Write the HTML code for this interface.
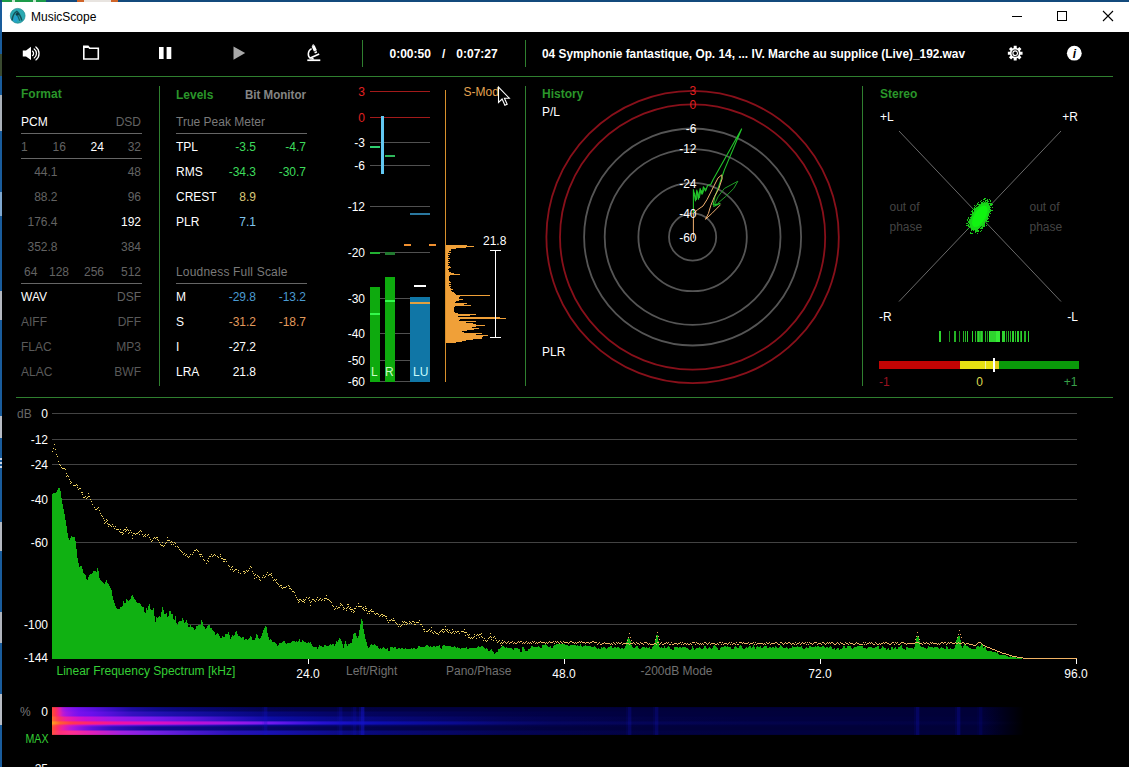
<!DOCTYPE html>
<html><head><meta charset="utf-8"><title>MusicScope</title>
<style>html,body{margin:0;padding:0;background:#000;overflow:hidden}svg{display:block}text{font-family:"Liberation Sans",sans-serif;font-size:12px}</style>
</head><body>
<svg width="1129" height="767" viewBox="0 0 1129 767">
<rect x="0" y="0" width="1129" height="767" fill="#000"/>
<rect x="0" y="0" width="2" height="767" fill="#195c9c"/>
<rect x="0" y="54" width="2" height="22" fill="#3a4a30"/>
<rect x="0" y="95" width="2" height="36" fill="#aab0b8"/>
<rect x="0" y="192" width="2" height="24" fill="#7fa8d0"/>
<rect x="0" y="291" width="2" height="29" fill="#b4b8c0"/>
<rect x="0" y="416" width="2" height="22" fill="#b8bcc4"/>
<rect x="0" y="522" width="2" height="29" fill="#b4b8c0"/>
<rect x="0" y="612" width="2" height="31" fill="#b0b4bc"/>
<rect x="0" y="694" width="2" height="31" fill="#b8bcc4"/>
<rect x="0" y="458" width="2" height="2" fill="#c8d4e8"/>
<rect x="0" y="462" width="2" height="2" fill="#c8d4e8"/>
<rect x="0" y="466" width="2" height="2" fill="#c8d4e8"/>
<rect x="0" y="0" width="1129" height="2" fill="#134a7c"/>
<rect x="2" y="0" width="44" height="2" fill="#1c9a48"/>
<rect x="12" y="0" width="3" height="2" fill="#c8e8d0"/>
<rect x="33" y="0" width="3" height="2" fill="#c8e8d0"/>
<rect x="77" y="0" width="7" height="2" fill="#d06428"/>
<rect x="84" y="0" width="27" height="2" fill="#e8e4e0"/>
<rect x="111" y="0" width="7" height="2" fill="#d06428"/>
<rect x="2" y="2" width="1127" height="30" fill="#fff"/>
<circle cx="17.7" cy="15.8" r="7.4" fill="#2aa9b2" stroke="#1f8890" stroke-width="0.7"/>
<path d="M13.3 20.8 C13.6 17.6 14.8 15.6 16.6 14.6 L18.2 18.6 L16.2 22.6 Z" fill="#22a0cc"/>
<path d="M12 20.4 C12.6 15.6 14.4 12.6 16.8 11.4 C18.8 12.8 20.6 16.2 21.8 20.4" fill="none" stroke="#14505a" stroke-width="1.5"/>
<circle cx="17.3" cy="14.3" r="1.5" fill="#0e3c44"/>
<path d="M17.6 15.5 L19.8 20.8" stroke="#15606c" stroke-width="1.2"/>
<text x="31" y="20.5" fill="#000">MusicScope</text>
<g stroke="#000" stroke-width="1" fill="none" shape-rendering="crispEdges">
<line x1="1012" y1="16.5" x2="1022" y2="16.5"/>
<rect x="1057.5" y="11.5" width="9" height="9"/>
</g>
<path d="M1103 11 L1113 21 M1113 11 L1103 21" stroke="#000" stroke-width="1.1" fill="none"/>
<g shape-rendering="crispEdges">
<rect x="16" y="76" width="1097" height="1" fill="#2f7f2f"/>
<rect x="16" y="397" width="1097" height="1" fill="#2f7f2f"/>
<rect x="362" y="40" width="1" height="27" fill="#2f7f2f"/>
<rect x="525" y="40" width="1" height="27" fill="#2f7f2f"/>
<rect x="159" y="86" width="1" height="300" fill="#2f7f2f"/>
<rect x="525" y="86" width="1" height="300" fill="#2f7f2f"/>
<rect x="862" y="86" width="1" height="300" fill="#2f7f2f"/>
</g>
<path d="M22.8 50.6 H26 L31 46.8 V60 L26 56.4 H22.8 Z" fill="#fff"/>
<g fill="none" stroke="#fff" stroke-width="1.3" stroke-linecap="round">
<path d="M32.6 51.2 A3 3 0 0 1 32.6 55.6"/>
<path d="M34.2 48.9 A5.6 5.6 0 0 1 34.2 57.9"/>
<path d="M35.9 46.9 A8.3 8.3 0 0 1 35.9 59.9"/>
</g>
<path d="M83.8 59 V46.3 H88 L89.6 48.3 H98.3 V59 Z" fill="none" stroke="#fff" stroke-width="1.6" stroke-linejoin="miter"/>
<rect x="83.8" y="46" width="4.6" height="2" fill="#fff"/>
<rect x="159" y="47" width="4.6" height="12" fill="#fff"/>
<rect x="166.6" y="47" width="4.7" height="12" fill="#fff"/>
<path d="M233.5 46.5 L245.2 53.1 L233.5 59.7 Z" fill="#a8a8a8"/>
<g fill="#fff" stroke="none">
<rect x="307.3" y="59.4" width="13" height="1.7"/>
<path d="M311.6 46.4 L314.6 45.2 L316.9 50.2 L313.9 51.4 Z"/>
<path d="M312.0 45.0 L313.8 44.3 L314.3 45.4 L312.5 46.1 Z"/>
<path d="M314.3 51.9 L316.6 51.0 L317.2 52.5 L314.9 53.4 Z"/>
</g>
<path d="M311.6 48.6 C307.6 50.8 307.2 56.2 310.6 58.6" fill="none" stroke="#fff" stroke-width="1.5"/>
<path d="M310.2 58.0 L319.2 53.9" fill="none" stroke="#fff" stroke-width="1.6"/>
<path d="M310.5 59.5 C311 57.6 313.5 57.4 314.2 59.5" fill="#fff"/>
<text x="389.5" y="58" fill="#fff" font-weight="bold">0:00:50</text>
<text x="442" y="58" fill="#fff" font-weight="bold">/</text>
<text x="456.3" y="58" fill="#fff" font-weight="bold">0:07:27</text>
<text x="542" y="58" fill="#fff" font-weight="bold" textLength="423" lengthAdjust="spacingAndGlyphs">04 Symphonie fantastique, Op. 14, ... IV. Marche au supplice (Live)_192.wav</text>
<path d="M1013.71 45.85 L1016.69 45.85 L1016.74 48.03 L1017.77 48.45 L1019.34 46.95 L1021.45 49.06 L1019.95 50.63 L1020.37 51.65 L1022.55 51.71 L1022.55 54.69 L1020.37 54.74 L1019.95 55.77 L1021.45 57.34 L1019.34 59.45 L1017.77 57.95 L1016.75 58.37 L1016.69 60.55 L1013.71 60.55 L1013.66 58.37 L1012.63 57.95 L1011.06 59.45 L1008.95 57.34 L1010.45 55.77 L1010.03 54.75 L1007.85 54.69 L1007.85 51.71 L1010.03 51.66 L1010.45 50.63 L1008.95 49.06 L1011.06 46.95 L1012.63 48.45 L1013.65 48.03 Z" fill="#fff"/>
<circle cx="1015.2" cy="53.2" r="3.6" fill="#000"/>
<circle cx="1015.2" cy="53.2" r="2.3" fill="none" stroke="#fff" stroke-width="1.1"/>
<circle cx="1074.3" cy="53.2" r="7.4" fill="#fff"/>
<text x="1074.3" y="58" fill="#000" text-anchor="middle" font-family="'Liberation Serif',serif" font-style="italic" font-weight="bold" font-size="13">i</text>
<text x="21" y="98" fill="#2a962a" font-weight="bold">Format</text>
<text x="21" y="126" fill="#fff">PCM</text>
<text x="141" y="126" fill="#636363" text-anchor="end">DSD</text>
<g shape-rendering="crispEdges">
<rect x="21" y="133" width="121" height="1" fill="#666"/>
<rect x="21" y="158" width="121" height="1" fill="#666"/>
<rect x="21" y="283" width="121" height="1" fill="#666"/>
</g>
<text x="21" y="151" fill="#636363">1</text>
<text x="52.5" y="151" fill="#636363">16</text>
<text x="90.5" y="151" fill="#fff">24</text>
<text x="141" y="151" fill="#636363" text-anchor="end">32</text>
<text x="57.5" y="176" fill="#636363" text-anchor="end">44.1</text>
<text x="141" y="176" fill="#636363" text-anchor="end">48</text>
<text x="57.5" y="201" fill="#636363" text-anchor="end">88.2</text>
<text x="141" y="201" fill="#636363" text-anchor="end">96</text>
<text x="57.5" y="226" fill="#636363" text-anchor="end">176.4</text>
<text x="141" y="226" fill="#fff" text-anchor="end">192</text>
<text x="57.5" y="251" fill="#636363" text-anchor="end">352.8</text>
<text x="141" y="251" fill="#636363" text-anchor="end">384</text>
<text x="24" y="276" fill="#636363">64</text>
<text x="49" y="276" fill="#636363">128</text>
<text x="84" y="276" fill="#636363">256</text>
<text x="141" y="276" fill="#636363" text-anchor="end">512</text>
<text x="21" y="301" fill="#fff">WAV</text>
<text x="141" y="301" fill="#636363" text-anchor="end">DSF</text>
<text x="21" y="326" fill="#5a5a5a">AIFF</text>
<text x="141" y="326" fill="#5a5a5a" text-anchor="end">DFF</text>
<text x="21" y="351" fill="#5a5a5a">FLAC</text>
<text x="141" y="351" fill="#5a5a5a" text-anchor="end">MP3</text>
<text x="21" y="376" fill="#5a5a5a">ALAC</text>
<text x="141" y="376" fill="#5a5a5a" text-anchor="end">BWF</text>
<text x="176" y="99" fill="#2a962a" font-weight="bold">Levels</text>
<text x="245" y="99" fill="#858585" font-weight="bold" textLength="61" lengthAdjust="spacingAndGlyphs">Bit Monitor</text>
<text x="176" y="126" fill="#7a7a7a">True Peak Meter</text>
<g shape-rendering="crispEdges">
<rect x="176" y="133" width="131" height="1" fill="#666"/>
<rect x="176" y="283" width="131" height="1" fill="#666"/>
</g>
<text x="176" y="151" fill="#fff">TPL</text>
<text x="256" y="151" fill="#3ddc5c" text-anchor="end">-3.5</text>
<text x="306" y="151" fill="#3ddc5c" text-anchor="end">-4.7</text>
<text x="176" y="176" fill="#fff">RMS</text>
<text x="256" y="176" fill="#3ddc5c" text-anchor="end">-34.3</text>
<text x="306" y="176" fill="#3ddc5c" text-anchor="end">-30.7</text>
<text x="176" y="201" fill="#fff">CREST</text>
<text x="256" y="201" fill="#d9c878" text-anchor="end">8.9</text>
<text x="176" y="226" fill="#fff">PLR</text>
<text x="256" y="226" fill="#7fc4ee" text-anchor="end">7.1</text>
<text x="176" y="276" fill="#7a7a7a" textLength="111.5" lengthAdjust="spacing">Loudness Full Scale</text>
<text x="176" y="301" fill="#fff">M</text>
<text x="256" y="301" fill="#4a9bd2" text-anchor="end">-29.8</text>
<text x="306" y="301" fill="#4a9bd2" text-anchor="end">-13.2</text>
<text x="176" y="326" fill="#fff">S</text>
<text x="256" y="326" fill="#e29a5c" text-anchor="end">-31.2</text>
<text x="306" y="326" fill="#e29a5c" text-anchor="end">-18.7</text>
<text x="176" y="351" fill="#fff">I</text>
<text x="256" y="351" fill="#fff" text-anchor="end">-27.2</text>
<text x="176" y="376" fill="#fff">LRA</text>
<text x="256" y="376" fill="#fff" text-anchor="end">21.8</text>
<g shape-rendering="crispEdges">
<rect x="370" y="91" width="60" height="1" fill="#a31a1a"/>
<rect x="370" y="117" width="60" height="1" fill="#a31a1a"/>
<rect x="370" y="142" width="60" height="1" fill="#505050"/>
<rect x="370" y="165" width="60" height="1" fill="#505050"/>
<rect x="370" y="206" width="60" height="1" fill="#505050"/>
<rect x="370" y="252" width="60" height="1" fill="#505050"/>
<rect x="370" y="298" width="60" height="1" fill="#505050"/>
<rect x="370" y="333" width="60" height="1" fill="#505050"/>
<rect x="370" y="360" width="60" height="1" fill="#505050"/>
<rect x="370" y="381" width="60" height="1" fill="#505050"/>
</g>
<text x="365" y="96" fill="#e02020" text-anchor="end">3</text>
<text x="365" y="122" fill="#e02020" text-anchor="end">0</text>
<text x="365" y="147" fill="#fff" text-anchor="end">-3</text>
<text x="365" y="170" fill="#fff" text-anchor="end">-6</text>
<text x="365" y="211" fill="#fff" text-anchor="end">-12</text>
<text x="365" y="257" fill="#fff" text-anchor="end">-20</text>
<text x="365" y="303" fill="#fff" text-anchor="end">-30</text>
<text x="365" y="338" fill="#fff" text-anchor="end">-40</text>
<text x="365" y="365" fill="#fff" text-anchor="end">-50</text>
<text x="365" y="386" fill="#fff" text-anchor="end">-60</text>
<g shape-rendering="crispEdges">
<rect x="381" y="116" width="3" height="58" fill="#62c8f2"/>
<rect x="370" y="146" width="10" height="2" fill="#2fd070"/>
<rect x="385" y="155" width="10" height="2" fill="#2fb85c"/>
<rect x="410" y="213" width="20" height="2" fill="#2a78a0"/>
<rect x="370" y="252" width="10" height="2" fill="#22b032"/>
<rect x="385" y="252" width="10" height="3" fill="#227a30"/>
<rect x="404" y="244" width="7" height="2" fill="#f09030"/>
<rect x="429" y="244" width="7" height="2" fill="#f09030"/>
<rect x="370" y="287" width="10" height="95" fill="#0eaa0e"/>
<rect x="385" y="277" width="10" height="105" fill="#0eaa0e"/>
<rect x="370" y="313" width="10" height="2" fill="#34f84c"/>
<rect x="385" y="300" width="10" height="2" fill="#34f84c"/>
<rect x="410" y="297" width="20" height="85" fill="#1076a6"/>
<rect x="410" y="302" width="20" height="2" fill="#e0a040"/>
<rect x="414" y="285" width="12" height="2" fill="#fff"/>
</g>
<text x="371" y="376" fill="#c8fcc8">L</text>
<text x="385" y="376" fill="#c8fcc8">R</text>
<text x="413" y="376" fill="#c8fcfc">LU</text>
<g shape-rendering="crispEdges">
<rect x="445" y="90" width="1" height="292" fill="#d8902c"/>
</g>
<text x="463.5" y="96" fill="#e4a352">S-Mod</text>
<g shape-rendering="crispEdges" fill="#f0a038">
<rect x="446" y="245" width="21" height="1"/>
<rect x="446" y="246" width="28" height="1"/>
<rect x="446" y="247" width="20" height="1"/>
<rect x="446" y="248" width="10" height="1"/>
<rect x="446" y="249" width="5" height="1"/>
<rect x="446" y="250" width="5" height="1"/>
<rect x="446" y="251" width="3" height="1"/>
<rect x="446" y="252" width="5" height="1"/>
<rect x="446" y="253" width="2" height="1"/>
<rect x="446" y="254" width="4" height="1"/>
<rect x="446" y="255" width="2" height="1"/>
<rect x="446" y="256" width="3" height="1"/>
<rect x="446" y="257" width="2" height="1"/>
<rect x="446" y="258" width="4" height="1"/>
<rect x="446" y="259" width="2" height="1"/>
<rect x="446" y="260" width="3" height="1"/>
<rect x="446" y="261" width="2" height="1"/>
<rect x="446" y="262" width="4" height="1"/>
<rect x="446" y="263" width="2" height="1"/>
<rect x="446" y="264" width="3" height="1"/>
<rect x="446" y="265" width="2" height="1"/>
<rect x="446" y="266" width="4" height="1"/>
<rect x="446" y="267" width="5" height="1"/>
<rect x="446" y="268" width="3" height="1"/>
<rect x="446" y="269" width="2" height="1"/>
<rect x="446" y="270" width="3" height="1"/>
<rect x="446" y="271" width="3" height="1"/>
<rect x="446" y="272" width="5" height="1"/>
<rect x="446" y="273" width="8" height="1"/>
<rect x="446" y="274" width="14" height="1"/>
<rect x="446" y="275" width="4" height="1"/>
<rect x="446" y="276" width="3" height="1"/>
<rect x="446" y="277" width="3" height="1"/>
<rect x="446" y="278" width="3" height="1"/>
<rect x="446" y="279" width="3" height="1"/>
<rect x="446" y="280" width="3" height="1"/>
<rect x="446" y="281" width="4" height="1"/>
<rect x="446" y="282" width="5" height="1"/>
<rect x="446" y="283" width="3" height="1"/>
<rect x="446" y="284" width="5" height="1"/>
<rect x="446" y="285" width="3" height="1"/>
<rect x="446" y="286" width="5" height="1"/>
<rect x="446" y="287" width="4" height="1"/>
<rect x="446" y="288" width="5" height="1"/>
<rect x="446" y="289" width="7" height="1"/>
<rect x="446" y="290" width="5" height="1"/>
<rect x="446" y="291" width="6" height="1"/>
<rect x="446" y="292" width="8" height="1"/>
<rect x="446" y="293" width="9" height="1"/>
<rect x="446" y="294" width="10" height="1"/>
<rect x="446" y="295" width="44" height="1"/>
<rect x="446" y="296" width="14" height="1"/>
<rect x="446" y="297" width="13" height="1"/>
<rect x="446" y="298" width="13" height="1"/>
<rect x="446" y="299" width="17" height="1"/>
<rect x="446" y="300" width="13" height="1"/>
<rect x="446" y="301" width="10" height="1"/>
<rect x="446" y="302" width="9" height="1"/>
<rect x="446" y="303" width="21" height="1"/>
<rect x="446" y="304" width="18" height="1"/>
<rect x="446" y="305" width="25" height="1"/>
<rect x="446" y="306" width="9" height="1"/>
<rect x="446" y="307" width="8" height="1"/>
<rect x="446" y="308" width="8" height="1"/>
<rect x="446" y="309" width="8" height="1"/>
<rect x="446" y="310" width="8" height="1"/>
<rect x="446" y="311" width="8" height="1"/>
<rect x="446" y="312" width="9" height="1"/>
<rect x="446" y="313" width="12" height="1"/>
<rect x="446" y="314" width="30" height="1"/>
<rect x="446" y="315" width="24" height="1"/>
<rect x="446" y="316" width="12" height="1"/>
<rect x="446" y="317" width="54" height="1"/>
<rect x="446" y="318" width="60" height="1"/>
<rect x="446" y="319" width="14" height="1"/>
<rect x="446" y="320" width="13" height="1"/>
<rect x="446" y="321" width="30" height="1"/>
<rect x="446" y="322" width="20" height="1"/>
<rect x="446" y="323" width="27" height="1"/>
<rect x="446" y="324" width="30" height="1"/>
<rect x="446" y="325" width="39" height="1"/>
<rect x="446" y="326" width="30" height="1"/>
<rect x="446" y="327" width="26" height="1"/>
<rect x="446" y="328" width="33" height="1"/>
<rect x="446" y="329" width="28" height="1"/>
<rect x="446" y="330" width="21" height="1"/>
<rect x="446" y="331" width="16" height="1"/>
<rect x="446" y="332" width="18" height="1"/>
<rect x="446" y="333" width="36" height="1"/>
<rect x="446" y="334" width="30" height="1"/>
<rect x="446" y="335" width="42" height="1"/>
<rect x="446" y="336" width="37" height="1"/>
<rect x="446" y="337" width="36" height="1"/>
<rect x="446" y="338" width="36" height="1"/>
<rect x="446" y="339" width="27" height="1"/>
<rect x="446" y="340" width="20" height="1"/>
<rect x="446" y="341" width="16" height="1"/>
<rect x="446" y="342" width="10" height="1"/>
</g>
<g shape-rendering="crispEdges">
<rect x="495" y="250" width="1" height="88" fill="#fff"/>
<rect x="490" y="250" width="11" height="1" fill="#fff"/>
<rect x="490" y="337" width="11" height="1" fill="#fff"/>
</g>
<text x="483" y="245" fill="#fff">21.8</text>
<path d="M498.5 87 V102.4 L502.1 99 L504.9 105.3 L507.2 104.3 L504.4 98.2 H509.3 Z" fill="#000" stroke="#fff" stroke-width="1.1" stroke-linejoin="miter"/>
<text x="542" y="98" fill="#2a962a" font-weight="bold">History</text>
<text x="542" y="116" fill="#fff">P/L</text>
<text x="542" y="356" fill="#fff">PLR</text>
<circle cx="692.6" cy="237" r="146.2" fill="none" stroke="#88101a" stroke-width="1.8"/>
<circle cx="692.6" cy="237" r="132.6" fill="none" stroke="#88101a" stroke-width="1.8"/>
<circle cx="692.6" cy="237" r="108.5" fill="none" stroke="#555" stroke-width="1.8"/>
<circle cx="692.6" cy="237" r="87.9" fill="none" stroke="#555" stroke-width="1.8"/>
<circle cx="692.6" cy="237" r="54.2" fill="none" stroke="#555" stroke-width="1.8"/>
<circle cx="692.6" cy="237" r="23.6" fill="none" stroke="#555" stroke-width="1.8"/>
<text x="692.8" y="95" fill="#e02020" text-anchor="middle">3</text>
<text x="692.8" y="109" fill="#e02020" text-anchor="middle">0</text>
<polyline points="693.4,213.5 693.4,189.5 695.5,201.0 696.8,190.1 698.4,199.3 700.1,188.5 702.0,194.3 703.4,186.8 705.5,191.0 707.6,185.5 710.9,184.3 713.0,179.7 741.6,129.0 724.3,170.1 721.6,178.0 718.0,188.5 714.9,196.8 713.2,204.7 720.1,203.5 713.5,206.4" fill="none" stroke="#22c42a" stroke-width="1.1" stroke-linejoin="round"/>
<polyline points="713.5,206.4 718.0,196.8 724.3,188.5 737.9,181.2 733.7,188.5 725.3,196.8 718.0,203.1" fill="none" stroke="#1f9c26" stroke-width="1.0" stroke-linejoin="round"/>
<polyline points="694.3,192.6 696.3,199.9 697.6,191.6 699.3,197.9 700.9,190.1 702.6,193.7 704.3,188.1 706.4,189.5" fill="none" stroke="#22c42a" stroke-width="1.0" stroke-linejoin="round"/>
<polyline points="693.4,238.5 693.4,213.5 697.6,209.7 703.0,206.0 707.2,199.3 713.5,186.8 718.0,178.0 721.6,174.9 722.2,178.5 718.9,188.5 714.3,196.8 710.9,205.2 708.4,213.5 705.5,219.3 711.8,213.5 716.4,208.9 720.5,204.7" fill="none" stroke="#f0b070" stroke-width="1" stroke-linejoin="round"/>
<text x="696.5" y="133" fill="#fff" text-anchor="end">-6</text>
<text x="696.5" y="153" fill="#fff" text-anchor="end">-12</text>
<text x="696.5" y="188" fill="#fff" text-anchor="end">-24</text>
<text x="696.5" y="218" fill="#fff" text-anchor="end">-40</text>
<text x="696.5" y="242" fill="#fff" text-anchor="end">-60</text>
<text x="880" y="98" fill="#2a962a" font-weight="bold">Stereo</text>
<text x="880" y="121" fill="#fff">+L</text>
<text x="1078" y="121" fill="#fff" text-anchor="end">+R</text>
<text x="879" y="321" fill="#fff">-R</text>
<text x="1078" y="321" fill="#fff" text-anchor="end">-L</text>
<line x1="899" y1="131" x2="1061" y2="301.5" stroke="#6a6a6a" stroke-width="1"/>
<line x1="1061" y1="131" x2="899" y2="301.5" stroke="#6a6a6a" stroke-width="1"/>
<text x="889.5" y="210.5" fill="#444">out of</text>
<text x="889.5" y="230.5" fill="#444">phase</text>
<text x="1029.5" y="210.5" fill="#444">out of</text>
<text x="1029.5" y="230.5" fill="#444">phase</text>
<path d="M976 219h1v1h-1zM980 213h1v1h-1zM977 212h1v1h-1zM982 222h1v1h-1zM982 220h1v1h-1zM980 218h1v1h-1zM969 219h1v1h-1zM979 221h1v1h-1zM978 210h1v1h-1zM981 216h1v1h-1zM984 212h1v1h-1zM979 219h1v1h-1zM969 227h1v1h-1zM976 226h1v1h-1zM980 209h1v1h-1zM978 214h1v1h-1zM981 219h1v1h-1zM982 208h1v1h-1zM972 224h1v1h-1zM975 216h1v1h-1zM988 205h1v1h-1zM974 226h1v1h-1zM973 209h1v1h-1zM982 209h1v1h-1zM982 216h1v1h-1zM970 219h1v1h-1zM978 225h1v1h-1zM983 222h1v1h-1zM985 206h1v1h-1zM984 213h1v1h-1zM983 205h1v1h-1zM978 210h1v1h-1zM973 214h1v1h-1zM982 223h1v1h-1zM984 211h1v1h-1zM971 221h1v1h-1zM983 219h1v1h-1zM978 220h1v1h-1zM983 224h1v1h-1zM979 221h1v1h-1zM968 222h1v1h-1zM981 222h1v1h-1zM974 207h1v1h-1zM991 204h1v1h-1zM974 223h1v1h-1zM967 225h1v1h-1zM982 216h1v1h-1zM978 221h1v1h-1zM975 225h1v1h-1zM979 211h1v1h-1zM983 218h1v1h-1zM972 221h1v1h-1zM987 216h1v1h-1zM975 212h1v1h-1zM980 213h1v1h-1zM989 211h1v1h-1zM990 209h1v1h-1zM973 219h1v1h-1zM980 225h1v1h-1zM980 218h1v1h-1zM977 221h1v1h-1zM977 218h1v1h-1zM982 217h1v1h-1zM980 222h1v1h-1zM986 223h1v1h-1zM979 212h1v1h-1zM975 223h1v1h-1zM976 218h1v1h-1zM974 215h1v1h-1zM980 219h1v1h-1zM975 220h1v1h-1zM983 212h1v1h-1zM978 214h1v1h-1zM979 215h1v1h-1zM988 209h1v1h-1zM975 223h1v1h-1zM976 229h1v1h-1zM974 209h1v1h-1zM975 220h1v1h-1zM990 207h1v1h-1zM989 206h1v1h-1zM975 225h1v1h-1zM978 217h1v1h-1zM982 219h1v1h-1zM972 227h1v1h-1zM985 216h1v1h-1zM984 216h1v1h-1zM977 221h1v1h-1zM977 221h1v1h-1zM980 201h1v1h-1zM986 210h1v1h-1zM982 202h1v1h-1zM981 224h1v1h-1zM989 212h1v1h-1zM984 207h1v1h-1zM975 230h1v1h-1zM969 226h1v1h-1zM984 217h1v1h-1zM982 211h1v1h-1zM979 220h1v1h-1zM990 211h1v1h-1zM977 230h1v1h-1zM986 218h1v1h-1zM972 222h1v1h-1zM979 217h1v1h-1zM986 217h1v1h-1zM968 218h1v1h-1zM983 212h1v1h-1zM976 222h1v1h-1zM974 226h1v1h-1zM974 224h1v1h-1zM978 231h1v1h-1zM973 221h1v1h-1zM977 203h1v1h-1zM967 220h1v1h-1zM975 213h1v1h-1zM979 215h1v1h-1zM976 216h1v1h-1zM986 220h1v1h-1zM977 225h1v1h-1zM984 206h1v1h-1zM972 223h1v1h-1zM976 208h1v1h-1zM980 224h1v1h-1zM976 222h1v1h-1zM985 207h1v1h-1zM976 207h1v1h-1zM985 214h1v1h-1zM979 208h1v1h-1zM974 211h1v1h-1zM973 216h1v1h-1zM985 200h1v1h-1zM983 215h1v1h-1zM982 213h1v1h-1zM979 223h1v1h-1zM980 220h1v1h-1zM982 224h1v1h-1zM990 201h1v1h-1zM977 228h1v1h-1zM980 212h1v1h-1zM973 219h1v1h-1zM987 219h1v1h-1zM978 224h1v1h-1zM976 213h1v1h-1zM977 223h1v1h-1zM980 214h1v1h-1zM977 211h1v1h-1zM982 219h1v1h-1zM980 207h1v1h-1zM980 221h1v1h-1zM984 223h1v1h-1zM977 220h1v1h-1zM967 219h1v1h-1zM984 211h1v1h-1zM977 233h1v1h-1zM977 208h1v1h-1zM980 218h1v1h-1zM982 207h1v1h-1zM981 203h1v1h-1zM982 227h1v1h-1zM983 226h1v1h-1zM975 216h1v1h-1zM974 205h1v1h-1zM977 220h1v1h-1zM977 213h1v1h-1zM979 220h1v1h-1zM981 219h1v1h-1zM975 221h1v1h-1zM983 210h1v1h-1zM977 214h1v1h-1zM978 217h1v1h-1zM979 217h1v1h-1zM984 206h1v1h-1zM976 225h1v1h-1zM982 215h1v1h-1zM985 209h1v1h-1zM972 212h1v1h-1zM972 219h1v1h-1zM968 225h1v1h-1zM984 205h1v1h-1zM974 218h1v1h-1zM980 218h1v1h-1zM982 225h1v1h-1zM977 220h1v1h-1zM981 227h1v1h-1zM988 210h1v1h-1zM976 221h1v1h-1zM973 223h1v1h-1zM978 224h1v1h-1zM985 217h1v1h-1zM974 222h1v1h-1zM983 218h1v1h-1zM974 215h1v1h-1zM976 225h1v1h-1zM982 218h1v1h-1zM980 222h1v1h-1zM980 217h1v1h-1zM975 220h1v1h-1zM978 209h1v1h-1zM986 205h1v1h-1zM986 200h1v1h-1zM974 219h1v1h-1zM982 217h1v1h-1zM985 204h1v1h-1zM984 224h1v1h-1zM987 212h1v1h-1zM987 202h1v1h-1zM978 225h1v1h-1zM972 211h1v1h-1zM990 204h1v1h-1zM977 204h1v1h-1zM983 204h1v1h-1zM978 218h1v1h-1zM979 223h1v1h-1zM980 228h1v1h-1zM976 209h1v1h-1zM980 205h1v1h-1zM979 216h1v1h-1zM988 205h1v1h-1zM975 213h1v1h-1zM980 213h1v1h-1zM982 210h1v1h-1zM980 220h1v1h-1zM982 210h1v1h-1zM975 214h1v1h-1zM973 214h1v1h-1zM986 206h1v1h-1zM980 213h1v1h-1zM978 221h1v1h-1zM983 209h1v1h-1zM979 215h1v1h-1zM981 220h1v1h-1zM982 204h1v1h-1zM981 209h1v1h-1zM975 212h1v1h-1zM977 215h1v1h-1zM983 214h1v1h-1zM983 219h1v1h-1zM975 216h1v1h-1zM975 226h1v1h-1zM978 225h1v1h-1zM982 216h1v1h-1zM986 209h1v1h-1zM988 211h1v1h-1zM971 233h1v1h-1zM978 215h1v1h-1zM984 219h1v1h-1zM975 216h1v1h-1zM978 223h1v1h-1zM969 227h1v1h-1zM986 220h1v1h-1zM982 213h1v1h-1zM988 214h1v1h-1zM984 214h1v1h-1zM973 220h1v1h-1zM985 219h1v1h-1zM973 220h1v1h-1zM978 218h1v1h-1zM980 228h1v1h-1zM976 222h1v1h-1zM977 214h1v1h-1zM990 210h1v1h-1zM981 200h1v1h-1zM986 215h1v1h-1zM980 213h1v1h-1zM984 207h1v1h-1zM986 205h1v1h-1zM978 218h1v1h-1zM982 215h1v1h-1zM975 215h1v1h-1zM971 227h1v1h-1zM983 217h1v1h-1zM981 209h1v1h-1zM977 211h1v1h-1zM978 220h1v1h-1zM972 233h1v1h-1zM976 214h1v1h-1zM977 216h1v1h-1zM978 219h1v1h-1zM977 218h1v1h-1zM976 222h1v1h-1zM976 205h1v1h-1zM984 208h1v1h-1zM972 218h1v1h-1zM974 219h1v1h-1zM981 220h1v1h-1zM982 216h1v1h-1zM974 212h1v1h-1zM983 213h1v1h-1zM976 221h1v1h-1zM973 219h1v1h-1zM989 216h1v1h-1zM981 215h1v1h-1zM984 222h1v1h-1zM986 213h1v1h-1zM979 216h1v1h-1zM966 223h1v1h-1zM991 204h1v1h-1zM983 216h1v1h-1zM979 220h1v1h-1zM974 211h1v1h-1zM988 215h1v1h-1zM981 203h1v1h-1zM973 216h1v1h-1zM984 223h1v1h-1zM970 233h1v1h-1zM980 209h1v1h-1zM979 221h1v1h-1zM980 205h1v1h-1zM979 218h1v1h-1zM975 211h1v1h-1zM975 218h1v1h-1zM979 215h1v1h-1zM973 223h1v1h-1zM986 216h1v1h-1zM986 212h1v1h-1zM976 222h1v1h-1zM987 216h1v1h-1zM978 217h1v1h-1zM973 213h1v1h-1zM975 217h1v1h-1zM984 198h1v1h-1zM978 218h1v1h-1zM973 221h1v1h-1zM981 211h1v1h-1zM988 205h1v1h-1zM977 214h1v1h-1zM983 216h1v1h-1zM983 211h1v1h-1zM973 229h1v1h-1zM977 214h1v1h-1zM975 224h1v1h-1zM978 223h1v1h-1zM979 218h1v1h-1zM981 221h1v1h-1zM991 210h1v1h-1zM984 215h1v1h-1zM980 214h1v1h-1zM981 208h1v1h-1zM974 219h1v1h-1zM979 216h1v1h-1zM975 222h1v1h-1zM982 216h1v1h-1zM983 216h1v1h-1zM968 224h1v1h-1zM985 210h1v1h-1zM982 221h1v1h-1zM966 225h1v1h-1zM977 223h1v1h-1zM981 215h1v1h-1zM969 220h1v1h-1zM981 214h1v1h-1zM980 217h1v1h-1zM984 214h1v1h-1zM989 199h1v1h-1zM975 220h1v1h-1zM986 216h1v1h-1zM972 228h1v1h-1zM975 221h1v1h-1zM986 220h1v1h-1zM987 213h1v1h-1zM980 216h1v1h-1zM975 225h1v1h-1zM975 218h1v1h-1zM973 217h1v1h-1zM983 215h1v1h-1zM988 205h1v1h-1zM989 206h1v1h-1zM979 210h1v1h-1zM974 221h1v1h-1zM981 213h1v1h-1zM974 229h1v1h-1zM978 219h1v1h-1zM983 221h1v1h-1zM977 219h1v1h-1zM980 223h1v1h-1zM983 207h1v1h-1zM975 224h1v1h-1zM980 206h1v1h-1zM988 201h1v1h-1zM980 212h1v1h-1zM984 211h1v1h-1zM978 211h1v1h-1zM982 211h1v1h-1zM976 222h1v1h-1zM976 231h1v1h-1zM978 211h1v1h-1zM977 214h1v1h-1zM987 207h1v1h-1zM981 217h1v1h-1zM971 214h1v1h-1zM992 204h1v1h-1zM982 219h1v1h-1zM979 220h1v1h-1zM985 217h1v1h-1zM985 215h1v1h-1zM986 211h1v1h-1zM971 229h1v1h-1zM982 216h1v1h-1zM978 207h1v1h-1zM976 223h1v1h-1zM979 221h1v1h-1zM973 226h1v1h-1zM980 211h1v1h-1zM982 218h1v1h-1zM981 211h1v1h-1zM976 220h1v1h-1zM986 207h1v1h-1zM980 218h1v1h-1zM972 219h1v1h-1zM980 213h1v1h-1zM977 228h1v1h-1zM975 218h1v1h-1zM972 224h1v1h-1zM973 221h1v1h-1zM975 219h1v1h-1zM982 210h1v1h-1zM987 221h1v1h-1zM969 219h1v1h-1zM968 221h1v1h-1zM976 216h1v1h-1zM984 220h1v1h-1zM981 200h1v1h-1zM981 224h1v1h-1zM972 221h1v1h-1zM978 222h1v1h-1zM972 208h1v1h-1zM980 223h1v1h-1zM978 220h1v1h-1zM978 215h1v1h-1zM985 214h1v1h-1zM987 212h1v1h-1zM983 212h1v1h-1zM983 211h1v1h-1zM968 221h1v1h-1zM983 212h1v1h-1zM976 224h1v1h-1zM976 213h1v1h-1zM979 221h1v1h-1zM987 199h1v1h-1zM983 221h1v1h-1zM981 214h1v1h-1zM982 213h1v1h-1zM979 208h1v1h-1zM980 210h1v1h-1zM972 218h1v1h-1zM971 218h1v1h-1zM974 216h1v1h-1zM984 220h1v1h-1zM976 215h1v1h-1zM988 203h1v1h-1zM976 216h1v1h-1zM977 215h1v1h-1zM979 223h1v1h-1zM980 222h1v1h-1zM978 215h1v1h-1zM980 213h1v1h-1zM986 202h1v1h-1zM978 215h1v1h-1zM976 213h1v1h-1zM982 216h1v1h-1zM987 201h1v1h-1zM983 215h1v1h-1zM981 221h1v1h-1zM982 211h1v1h-1zM984 214h1v1h-1zM982 212h1v1h-1zM971 211h1v1h-1zM977 222h1v1h-1zM976 214h1v1h-1zM981 218h1v1h-1zM984 199h1v1h-1zM976 229h1v1h-1zM979 224h1v1h-1zM980 209h1v1h-1zM987 211h1v1h-1zM977 204h1v1h-1zM980 209h1v1h-1zM983 211h1v1h-1zM985 218h1v1h-1zM969 223h1v1h-1zM976 216h1v1h-1zM981 213h1v1h-1zM984 211h1v1h-1zM978 207h1v1h-1zM979 216h1v1h-1zM981 218h1v1h-1zM979 209h1v1h-1zM972 210h1v1h-1zM979 221h1v1h-1zM980 214h1v1h-1zM983 218h1v1h-1zM980 222h1v1h-1zM974 226h1v1h-1zM979 212h1v1h-1zM980 208h1v1h-1zM977 220h1v1h-1zM980 225h1v1h-1zM990 209h1v1h-1zM975 218h1v1h-1zM984 220h1v1h-1zM978 211h1v1h-1zM981 208h1v1h-1zM988 214h1v1h-1zM970 232h1v1h-1zM982 221h1v1h-1zM975 218h1v1h-1zM983 224h1v1h-1zM984 219h1v1h-1zM982 215h1v1h-1zM975 227h1v1h-1zM974 212h1v1h-1zM983 212h1v1h-1zM975 221h1v1h-1zM984 225h1v1h-1zM987 205h1v1h-1zM986 221h1v1h-1zM984 207h1v1h-1zM984 207h1v1h-1zM978 220h1v1h-1zM978 218h1v1h-1zM970 225h1v1h-1zM985 200h1v1h-1zM982 210h1v1h-1zM977 211h1v1h-1zM986 207h1v1h-1zM972 226h1v1h-1zM983 216h1v1h-1zM980 215h1v1h-1zM976 221h1v1h-1zM983 209h1v1h-1zM985 213h1v1h-1zM970 233h1v1h-1zM980 205h1v1h-1zM970 214h1v1h-1zM985 200h1v1h-1zM971 217h1v1h-1zM978 211h1v1h-1zM975 227h1v1h-1zM982 228h1v1h-1zM979 218h1v1h-1zM980 231h1v1h-1zM976 219h1v1h-1zM980 217h1v1h-1zM983 205h1v1h-1zM984 203h1v1h-1zM982 223h1v1h-1zM968 224h1v1h-1zM991 203h1v1h-1zM983 226h1v1h-1zM980 220h1v1h-1zM979 218h1v1h-1zM990 207h1v1h-1zM981 202h1v1h-1zM980 210h1v1h-1zM980 219h1v1h-1zM982 211h1v1h-1zM973 222h1v1h-1zM982 218h1v1h-1zM971 227h1v1h-1zM974 219h1v1h-1zM985 216h1v1h-1zM987 209h1v1h-1zM982 220h1v1h-1zM970 217h1v1h-1zM970 224h1v1h-1zM977 213h1v1h-1zM982 214h1v1h-1zM983 212h1v1h-1zM982 217h1v1h-1zM984 219h1v1h-1zM972 213h1v1h-1zM976 225h1v1h-1zM968 225h1v1h-1zM976 221h1v1h-1zM983 206h1v1h-1zM980 225h1v1h-1zM982 226h1v1h-1zM984 202h1v1h-1zM980 209h1v1h-1zM974 218h1v1h-1zM982 214h1v1h-1zM981 215h1v1h-1zM977 222h1v1h-1zM986 213h1v1h-1zM967 223h1v1h-1zM975 224h1v1h-1zM974 210h1v1h-1zM986 205h1v1h-1zM974 220h1v1h-1zM976 230h1v1h-1zM982 203h1v1h-1zM977 224h1v1h-1zM986 206h1v1h-1zM979 224h1v1h-1zM984 213h1v1h-1zM977 223h1v1h-1zM985 200h1v1h-1zM978 220h1v1h-1zM975 223h1v1h-1zM977 214h1v1h-1zM976 219h1v1h-1zM987 217h1v1h-1zM980 222h1v1h-1zM987 218h1v1h-1zM984 207h1v1h-1zM975 227h1v1h-1zM980 220h1v1h-1zM978 217h1v1h-1zM969 221h1v1h-1zM983 206h1v1h-1zM980 208h1v1h-1zM978 226h1v1h-1zM970 220h1v1h-1zM985 213h1v1h-1zM977 207h1v1h-1zM975 217h1v1h-1zM987 200h1v1h-1zM987 205h1v1h-1zM988 209h1v1h-1zM980 208h1v1h-1zM971 224h1v1h-1zM980 222h1v1h-1zM987 205h1v1h-1zM980 210h1v1h-1zM973 217h1v1h-1zM980 209h1v1h-1zM976 227h1v1h-1zM984 209h1v1h-1zM983 221h1v1h-1zM976 229h1v1h-1zM986 215h1v1h-1zM980 224h1v1h-1zM975 209h1v1h-1zM974 212h1v1h-1zM986 209h1v1h-1zM974 228h1v1h-1zM969 221h1v1h-1zM977 217h1v1h-1zM974 223h1v1h-1zM983 219h1v1h-1zM971 218h1v1h-1zM975 220h1v1h-1zM973 229h1v1h-1zM986 215h1v1h-1zM973 230h1v1h-1zM975 218h1v1h-1zM978 228h1v1h-1zM987 207h1v1h-1zM973 215h1v1h-1zM971 223h1v1h-1zM990 205h1v1h-1zM975 215h1v1h-1zM978 214h1v1h-1zM985 211h1v1h-1zM984 212h1v1h-1zM975 219h1v1h-1zM976 217h1v1h-1zM985 220h1v1h-1zM975 221h1v1h-1zM973 223h1v1h-1zM972 218h1v1h-1zM981 209h1v1h-1zM990 213h1v1h-1zM983 225h1v1h-1zM989 212h1v1h-1zM978 230h1v1h-1zM979 215h1v1h-1zM980 210h1v1h-1zM980 219h1v1h-1zM972 229h1v1h-1zM976 219h1v1h-1zM989 211h1v1h-1zM975 232h1v1h-1zM979 204h1v1h-1zM983 199h1v1h-1zM989 203h1v1h-1zM975 228h1v1h-1zM974 210h1v1h-1zM968 217h1v1h-1zM978 212h1v1h-1zM977 220h1v1h-1zM978 215h1v1h-1zM977 215h1v1h-1zM974 214h1v1h-1zM974 208h1v1h-1zM986 221h1v1h-1zM973 215h1v1h-1zM983 201h1v1h-1zM973 220h1v1h-1zM981 216h1v1h-1zM980 205h1v1h-1zM983 221h1v1h-1zM975 213h1v1h-1zM981 215h1v1h-1zM984 205h1v1h-1zM968 226h1v1h-1zM973 221h1v1h-1zM974 210h1v1h-1zM976 224h1v1h-1zM972 218h1v1h-1zM984 211h1v1h-1zM985 210h1v1h-1zM976 214h1v1h-1zM982 202h1v1h-1zM974 221h1v1h-1zM972 225h1v1h-1zM981 203h1v1h-1zM984 222h1v1h-1zM987 212h1v1h-1zM981 220h1v1h-1zM982 217h1v1h-1zM987 214h1v1h-1zM982 202h1v1h-1zM987 213h1v1h-1zM979 206h1v1h-1zM983 205h1v1h-1zM981 210h1v1h-1zM981 207h1v1h-1zM981 212h1v1h-1zM979 218h1v1h-1zM990 200h1v1h-1zM981 209h1v1h-1zM989 206h1v1h-1zM978 212h1v1h-1zM974 223h1v1h-1zM973 222h1v1h-1zM982 222h1v1h-1zM981 218h1v1h-1zM987 208h1v1h-1zM985 214h1v1h-1zM983 219h1v1h-1zM984 217h1v1h-1zM977 217h1v1h-1zM980 211h1v1h-1zM979 217h1v1h-1zM985 220h1v1h-1zM981 228h1v1h-1zM979 217h1v1h-1zM982 210h1v1h-1zM982 211h1v1h-1zM983 224h1v1h-1zM986 200h1v1h-1zM981 213h1v1h-1zM980 205h1v1h-1zM980 215h1v1h-1zM984 220h1v1h-1zM982 213h1v1h-1zM970 226h1v1h-1zM976 231h1v1h-1zM978 215h1v1h-1zM972 221h1v1h-1zM971 217h1v1h-1zM977 229h1v1h-1zM971 222h1v1h-1zM980 208h1v1h-1zM969 222h1v1h-1zM988 215h1v1h-1zM978 212h1v1h-1zM985 201h1v1h-1zM971 223h1v1h-1zM988 218h1v1h-1zM979 210h1v1h-1zM968 218h1v1h-1zM970 221h1v1h-1zM978 202h1v1h-1zM984 211h1v1h-1zM982 218h1v1h-1zM972 218h1v1h-1zM991 203h1v1h-1zM984 224h1v1h-1zM990 203h1v1h-1zM978 212h1v1h-1zM990 207h1v1h-1zM985 198h1v1h-1zM977 218h1v1h-1zM975 208h1v1h-1zM974 229h1v1h-1zM983 215h1v1h-1zM979 206h1v1h-1zM976 215h1v1h-1zM972 228h1v1h-1zM985 208h1v1h-1zM981 227h1v1h-1zM983 211h1v1h-1zM977 204h1v1h-1zM986 212h1v1h-1zM973 214h1v1h-1zM978 221h1v1h-1zM976 228h1v1h-1zM972 221h1v1h-1zM972 219h1v1h-1zM979 218h1v1h-1zM983 218h1v1h-1zM980 225h1v1h-1zM982 212h1v1h-1zM979 210h1v1h-1zM979 215h1v1h-1zM986 211h1v1h-1zM978 212h1v1h-1zM985 208h1v1h-1zM988 215h1v1h-1zM978 218h1v1h-1zM977 221h1v1h-1zM980 218h1v1h-1zM975 206h1v1h-1zM981 215h1v1h-1zM979 210h1v1h-1zM973 225h1v1h-1zM981 208h1v1h-1zM976 216h1v1h-1zM978 218h1v1h-1zM975 223h1v1h-1zM992 210h1v1h-1zM981 214h1v1h-1zM987 205h1v1h-1zM981 218h1v1h-1zM981 209h1v1h-1zM978 206h1v1h-1zM980 222h1v1h-1zM977 220h1v1h-1zM977 215h1v1h-1zM977 220h1v1h-1zM980 215h1v1h-1zM982 211h1v1h-1zM986 225h1v1h-1zM992 207h1v1h-1zM978 224h1v1h-1zM981 230h1v1h-1zM987 209h1v1h-1zM975 216h1v1h-1zM986 209h1v1h-1zM980 212h1v1h-1zM978 218h1v1h-1zM984 206h1v1h-1zM977 231h1v1h-1zM974 223h1v1h-1zM978 222h1v1h-1zM985 211h1v1h-1zM977 225h1v1h-1zM967 229h1v1h-1zM984 226h1v1h-1zM981 210h1v1h-1zM976 215h1v1h-1zM976 221h1v1h-1zM988 221h1v1h-1zM980 221h1v1h-1zM981 215h1v1h-1zM982 209h1v1h-1zM980 216h1v1h-1zM984 210h1v1h-1zM979 216h1v1h-1zM986 209h1v1h-1zM977 224h1v1h-1zM983 214h1v1h-1zM978 213h1v1h-1zM975 229h1v1h-1zM982 211h1v1h-1zM980 218h1v1h-1zM979 208h1v1h-1zM976 221h1v1h-1zM979 205h1v1h-1zM987 208h1v1h-1zM978 219h1v1h-1zM983 208h1v1h-1zM981 213h1v1h-1zM984 210h1v1h-1zM991 205h1v1h-1zM979 215h1v1h-1zM986 213h1v1h-1zM984 213h1v1h-1zM975 231h1v1h-1zM976 218h1v1h-1zM971 221h1v1h-1zM984 219h1v1h-1zM973 216h1v1h-1zM979 227h1v1h-1zM991 204h1v1h-1zM970 225h1v1h-1zM970 222h1v1h-1zM983 226h1v1h-1zM985 216h1v1h-1zM975 212h1v1h-1zM979 215h1v1h-1zM983 216h1v1h-1zM978 219h1v1h-1zM971 230h1v1h-1zM981 217h1v1h-1zM981 211h1v1h-1zM984 220h1v1h-1zM978 209h1v1h-1zM981 212h1v1h-1zM989 209h1v1h-1zM981 218h1v1h-1zM975 214h1v1h-1zM977 219h1v1h-1zM976 217h1v1h-1zM978 204h1v1h-1zM978 226h1v1h-1zM982 211h1v1h-1z" fill="#1cc81c" shape-rendering="crispEdges"/>
<g transform="translate(979.8,216.3) rotate(30)">
<ellipse rx="7.8" ry="15.5" fill="#18d818"/>
<ellipse rx="5.6" ry="12" fill="#10f410"/>
</g>
<g shape-rendering="crispEdges">
<rect x="939" y="331" width="2" height="11" fill="#2ed42e"/>
<rect x="949" y="331" width="1" height="11" fill="#1c901c"/>
<rect x="954" y="331" width="2" height="11" fill="#25b425"/>
<rect x="959" y="331" width="1" height="11" fill="#1c901c"/>
<rect x="963" y="331" width="1" height="11" fill="#25b425"/>
<rect x="965" y="331" width="1" height="11" fill="#25b425"/>
<rect x="967" y="331" width="1" height="11" fill="#2ed42e"/>
<rect x="972" y="331" width="1" height="11" fill="#2ed42e"/>
<rect x="975" y="331" width="1" height="11" fill="#25b425"/>
<rect x="977" y="331" width="6" height="11" fill="#25b425"/>
<rect x="978" y="331" width="1" height="11" fill="#2ed42e"/>
<rect x="981" y="331" width="1" height="11" fill="#2ed42e"/>
<rect x="985" y="331" width="1" height="11" fill="#25b425"/>
<rect x="987" y="331" width="1" height="11" fill="#1c901c"/>
<rect x="989" y="331" width="11" height="11" fill="#2ed42e"/>
<rect x="989" y="331" width="1" height="11" fill="#36ec36"/>
<rect x="996" y="331" width="4" height="11" fill="#36ec36"/>
<rect x="1002" y="331" width="3" height="11" fill="#2ed42e"/>
<rect x="1006" y="331" width="1" height="11" fill="#1c901c"/>
<rect x="1008" y="331" width="1" height="11" fill="#25b425"/>
<rect x="1010" y="331" width="1" height="11" fill="#25b425"/>
<rect x="1012" y="331" width="2" height="11" fill="#2ed42e"/>
<rect x="1015" y="331" width="1" height="11" fill="#25b425"/>
<rect x="1017" y="331" width="2" height="11" fill="#2ed42e"/>
<rect x="1020" y="331" width="1" height="11" fill="#1c901c"/>
<rect x="1021" y="331" width="1" height="11" fill="#2ed42e"/>
<rect x="1024" y="331" width="2" height="11" fill="#25b425"/>
<rect x="1028" y="331" width="1" height="11" fill="#2ed42e"/>
<rect x="879" y="361" width="81" height="8" fill="#c20404"/>
<rect x="960" y="361" width="39" height="8" fill="#e6e012"/>
<rect x="995" y="361" width="4" height="8" fill="#e2cc18"/>
<rect x="999" y="361" width="80" height="8" fill="#0a9a0a"/>
<rect x="985" y="361" width="1" height="8" fill="#f4f0a0"/>
<rect x="993" y="358" width="2" height="14" fill="#fff"/>
</g>
<text x="879" y="386" fill="#9a1220">-1</text>
<text x="979.7" y="386" fill="#dcd850" text-anchor="middle">0</text>
<text x="1077.5" y="386" fill="#38a04a" text-anchor="end">+1</text>
<g shape-rendering="crispEdges">
<rect x="52" y="413" width="1025" height="1" fill="#434343"/>
<rect x="52" y="439" width="1025" height="1" fill="#434343"/>
<rect x="52" y="464" width="1025" height="1" fill="#434343"/>
<rect x="52" y="499" width="1025" height="1" fill="#434343"/>
<rect x="52" y="542" width="1025" height="1" fill="#434343"/>
<rect x="52" y="624" width="1025" height="1" fill="#434343"/>
</g>
<text x="17" y="418" fill="#666">dB</text>
<text x="48" y="418" fill="#fff" text-anchor="end">0</text>
<text x="48" y="444" fill="#fff" text-anchor="end">-12</text>
<text x="48" y="469" fill="#fff" text-anchor="end">-24</text>
<text x="48" y="504" fill="#fff" text-anchor="end">-40</text>
<text x="48" y="547" fill="#fff" text-anchor="end">-60</text>
<text x="48" y="629" fill="#fff" text-anchor="end">-100</text>
<text x="48" y="662" fill="#fff" text-anchor="end">-144</text>
<path d="M52 659 L52 494.5 L53 493.0 L54 493.9 L55 493.1 L56 493.4 L57 491.6 L58 488.5 L59 488.2 L60 487.8 L61 493.4 L62 502.1 L63 506.2 L64 511.5 L65 517.2 L66 522.6 L67 529.4 L68 536.0 L69 540.0 L70 539.4 L71 535.9 L72 536.1 L73 537.0 L74 536.4 L75 538.6 L76 543.8 L77 555.0 L78 560.7 L79 566.1 L80 567.1 L81 565.3 L82 567.2 L83 570.6 L84 575.7 L85 572.8 L86 577.4 L87 581.0 L88 578.7 L89 575.0 L90 574.5 L91 573.9 L92 574.7 L93 572.1 L94 570.9 L95 570.3 L96 572.4 L97 570.9 L98 565.7 L99 576.8 L100 580.1 L101 580.7 L102 581.8 L103 582.3 L104 583.3 L105 584.8 L106 579.5 L107 580.4 L108 585.1 L109 582.8 L110 589.2 L111 586.1 L112 594.2 L113 597.1 L114 602.8 L115 602.3 L116 609.6 L117 607.3 L118 611.0 L119 607.9 L120 609.9 L121 604.7 L122 609.4 L123 603.4 L124 599.3 L125 606.0 L126 600.1 L127 598.3 L128 601.4 L129 601.4 L130 599.5 L131 597.9 L132 595.1 L133 594.7 L134 599.2 L135 599.3 L136 600.9 L137 602.2 L138 604.1 L139 602.1 L140 604.3 L141 603.9 L142 607.6 L143 606.9 L144 607.7 L145 616.4 L146 608.8 L147 608.2 L148 611.2 L149 600.6 L150 607.5 L151 609.8 L152 609.4 L153 610.7 L154 604.8 L155 626.3 L156 617.2 L157 616.8 L158 618.6 L159 615.1 L160 617.1 L161 617.3 L162 606.2 L163 608.7 L164 611.8 L165 615.7 L166 613.0 L167 613.9 L168 619.3 L169 612.5 L170 609.1 L171 613.0 L172 614.6 L173 613.3 L174 624.4 L175 615.9 L176 615.6 L177 630.9 L178 619.0 L179 624.1 L180 618.4 L181 622.8 L182 619.9 L183 616.9 L184 622.1 L185 623.3 L186 620.0 L187 620.3 L188 625.3 L189 629.6 L190 624.1 L191 626.4 L192 626.8 L193 627.0 L194 629.0 L195 630.8 L196 627.6 L197 625.4 L198 626.3 L199 624.4 L200 625.3 L201 623.8 L202 615.7 L203 627.4 L204 625.3 L205 628.4 L206 629.8 L207 625.9 L208 626.4 L209 624.4 L210 626.4 L211 629.0 L212 627.7 L213 632.7 L214 630.3 L215 633.3 L216 636.2 L217 632.4 L218 633.7 L219 635.2 L220 637.4 L221 638.0 L222 639.0 L223 634.1 L224 639.8 L225 634.8 L226 633.1 L227 634.1 L228 633.5 L229 630.5 L230 638.8 L231 638.7 L232 635.4 L233 634.5 L234 637.5 L235 633.4 L236 630.3 L237 632.1 L238 635.1 L239 637.7 L240 634.7 L241 638.4 L242 636.8 L243 636.7 L244 637.2 L245 642.5 L246 635.8 L247 641.2 L248 639.8 L249 637.6 L250 637.7 L251 634.4 L252 640.4 L253 639.7 L254 639.6 L255 640.8 L256 635.4 L257 633.4 L258 636.5 L259 638.6 L260 639.7 L261 636.6 L262 635.3 L263 631.1 L264 628.8 L265 627.6 L266 623.5 L267 630.3 L268 634.8 L269 639.5 L270 639.5 L271 637.9 L272 642.4 L273 641.4 L274 642.0 L275 642.7 L276 644.0 L277 644.9 L278 646.5 L279 643.2 L280 643.5 L281 642.7 L282 643.2 L283 641.7 L284 640.8 L285 640.5 L286 644.8 L287 642.9 L288 642.7 L289 643.6 L290 642.8 L291 643.7 L292 641.1 L293 641.9 L294 639.9 L295 642.2 L296 641.3 L297 641.5 L298 642.1 L299 639.2 L300 638.9 L301 644.3 L302 640.5 L303 640.4 L304 641.9 L305 642.3 L306 642.5 L307 644.4 L308 641.7 L309 642.6 L310 642.6 L311 642.4 L312 645.4 L313 646.1 L314 647.0 L315 647.7 L316 645.9 L317 648.3 L318 649.7 L319 644.6 L320 646.4 L321 646.0 L322 645.6 L323 647.6 L324 645.5 L325 644.7 L326 646.1 L327 645.5 L328 646.8 L329 646.2 L330 643.4 L331 644.7 L332 644.4 L333 644.0 L334 644.9 L335 646.8 L336 642.2 L337 640.7 L338 643.0 L339 637.9 L340 637.6 L341 641.3 L342 641.4 L343 646.9 L344 648.3 L345 640.1 L346 641.4 L347 646.2 L348 645.5 L349 643.0 L350 644.4 L351 642.5 L352 642.5 L353 636.1 L354 632.5 L355 632.9 L356 633.7 L357 637.5 L358 637.8 L359 634.4 L360 626.3 L361 622.5 L362 615.2 L363 625.8 L364 631.9 L365 636.8 L366 640.5 L367 642.7 L368 649.3 L369 646.8 L370 646.9 L371 643.6 L372 645.4 L373 645.4 L374 645.3 L375 643.2 L376 646.2 L377 645.1 L378 646.4 L379 650.2 L380 647.8 L381 648.4 L382 648.7 L383 648.1 L384 646.9 L385 648.8 L386 649.8 L387 647.8 L388 648.3 L389 653.9 L390 647.2 L391 647.5 L392 647.2 L393 647.0 L394 648.7 L395 646.3 L396 647.4 L397 649.9 L398 648.0 L399 647.5 L400 649.1 L401 648.8 L402 647.4 L403 648.3 L404 649.1 L405 649.1 L406 647.6 L407 649.5 L408 648.0 L409 649.2 L410 649.3 L411 648.0 L412 648.7 L413 648.4 L414 646.9 L415 649.1 L416 649.1 L417 648.4 L418 647.4 L419 645.1 L420 646.8 L421 647.7 L422 646.9 L423 646.5 L424 646.6 L425 646.7 L426 645.9 L427 644.6 L428 645.9 L429 646.7 L430 647.5 L431 645.3 L432 647.8 L433 646.6 L434 645.7 L435 647.1 L436 646.1 L437 646.0 L438 646.3 L439 645.9 L440 645.1 L441 650.5 L442 646.7 L443 645.2 L444 644.5 L445 645.4 L446 646.1 L447 645.5 L448 646.4 L449 645.6 L450 645.5 L451 646.7 L452 646.8 L453 646.8 L454 647.0 L455 645.9 L456 647.9 L457 647.2 L458 647.3 L459 648.2 L460 648.6 L461 649.2 L462 647.8 L463 647.6 L464 648.7 L465 647.5 L466 647.9 L467 646.5 L468 651.4 L469 647.2 L470 649.2 L471 647.2 L472 649.2 L473 647.6 L474 647.8 L475 649.0 L476 646.8 L477 648.7 L478 646.3 L479 646.7 L480 648.1 L481 646.4 L482 645.5 L483 647.5 L484 647.1 L485 648.9 L486 648.3 L487 646.8 L488 651.2 L489 650.8 L490 651.7 L491 649.0 L492 649.6 L493 652.7 L494 651.3 L495 656.0 L496 650.0 L497 653.3 L498 649.8 L499 649.2 L500 648.4 L501 648.0 L502 645.7 L503 645.9 L504 645.3 L505 647.9 L506 647.8 L507 647.1 L508 648.8 L509 647.2 L510 649.4 L511 647.4 L512 648.3 L513 650.2 L514 649.1 L515 647.2 L516 648.0 L517 648.5 L518 647.8 L519 649.8 L520 649.0 L521 655.6 L522 647.6 L523 647.4 L524 647.5 L525 650.7 L526 651.0 L527 651.3 L528 650.3 L529 648.5 L530 648.8 L531 646.7 L532 645.4 L533 646.0 L534 647.9 L535 647.0 L536 646.3 L537 647.3 L538 646.6 L539 646.3 L540 646.9 L541 649.4 L542 646.1 L543 644.7 L544 645.9 L545 644.3 L546 644.7 L547 644.8 L548 646.7 L549 647.5 L550 646.7 L551 646.2 L552 648.9 L553 647.0 L554 645.1 L555 645.3 L556 644.7 L557 643.8 L558 644.7 L559 644.1 L560 643.7 L561 644.5 L562 644.4 L563 644.3 L564 644.7 L565 644.1 L566 645.2 L567 644.8 L568 645.5 L569 646.4 L570 645.3 L571 645.7 L572 645.3 L573 644.7 L574 645.9 L575 644.8 L576 646.2 L577 645.6 L578 644.8 L579 647.0 L580 645.2 L581 643.6 L582 648.2 L583 645.5 L584 646.8 L585 645.5 L586 645.1 L587 646.8 L588 645.8 L589 646.4 L590 645.2 L591 646.6 L592 646.8 L593 646.5 L594 647.3 L595 645.3 L596 648.4 L597 648.0 L598 649.5 L599 646.8 L600 650.7 L601 647.6 L602 647.2 L603 648.2 L604 646.6 L605 646.5 L606 649.4 L607 649.5 L608 646.5 L609 647.0 L610 646.5 L611 645.0 L612 647.9 L613 648.6 L614 646.8 L615 647.0 L616 646.9 L617 649.0 L618 645.3 L619 647.8 L620 648.6 L621 648.7 L622 647.3 L623 648.5 L624 649.9 L625 646.3 L626 645.0 L627 638.9 L628 638.4 L629 637.1 L630 639.9 L631 642.8 L632 646.7 L633 647.5 L634 648.9 L635 646.7 L636 646.5 L637 645.7 L638 646.8 L639 648.5 L640 649.3 L641 648.8 L642 647.9 L643 647.1 L644 647.3 L645 647.6 L646 647.5 L647 647.0 L648 648.6 L649 647.2 L650 647.4 L651 650.4 L652 647.4 L653 646.8 L654 644.6 L655 642.2 L656 636.4 L657 634.4 L658 636.0 L659 645.8 L660 648.9 L661 647.7 L662 646.8 L663 650.0 L664 645.8 L665 646.6 L666 649.3 L667 647.3 L668 647.0 L669 644.6 L670 648.5 L671 649.9 L672 647.5 L673 652.6 L674 646.6 L675 646.6 L676 647.4 L677 647.0 L678 647.1 L679 648.1 L680 645.3 L681 648.3 L682 647.2 L683 647.1 L684 646.6 L685 647.6 L686 646.6 L687 648.9 L688 647.0 L689 651.8 L690 647.6 L691 651.9 L692 646.6 L693 646.2 L694 648.9 L695 650.3 L696 648.2 L697 648.3 L698 648.0 L699 647.0 L700 647.8 L701 648.3 L702 649.5 L703 647.8 L704 647.9 L705 645.1 L706 647.5 L707 648.9 L708 649.1 L709 646.4 L710 647.3 L711 648.7 L712 649.2 L713 647.6 L714 645.3 L715 645.1 L716 647.7 L717 646.5 L718 649.9 L719 649.9 L720 649.7 L721 647.2 L722 646.7 L723 647.4 L724 646.6 L725 645.5 L726 647.4 L727 645.7 L728 646.6 L729 647.4 L730 646.4 L731 648.3 L732 648.8 L733 649.0 L734 648.8 L735 646.1 L736 645.7 L737 648.6 L738 648.2 L739 647.8 L740 643.8 L741 646.8 L742 646.2 L743 649.8 L744 648.0 L745 649.5 L746 646.5 L747 647.8 L748 647.9 L749 647.1 L750 645.4 L751 646.6 L752 649.4 L753 644.9 L754 645.9 L755 648.9 L756 648.4 L757 646.0 L758 645.8 L759 648.0 L760 645.5 L761 646.5 L762 649.2 L763 647.5 L764 645.7 L765 646.8 L766 644.7 L767 647.3 L768 648.4 L769 648.1 L770 645.5 L771 648.0 L772 647.3 L773 646.3 L774 648.6 L775 647.2 L776 645.1 L777 648.8 L778 647.4 L779 647.9 L780 646.2 L781 644.7 L782 646.8 L783 647.3 L784 648.2 L785 648.1 L786 647.3 L787 647.6 L788 648.5 L789 648.6 L790 648.2 L791 648.6 L792 646.9 L793 646.1 L794 647.5 L795 646.2 L796 647.2 L797 646.5 L798 646.4 L799 647.1 L800 647.4 L801 647.1 L802 645.8 L803 649.3 L804 649.1 L805 648.4 L806 648.4 L807 646.6 L808 648.8 L809 647.0 L810 645.6 L811 647.1 L812 646.4 L813 646.9 L814 647.9 L815 645.9 L816 646.7 L817 647.7 L818 645.3 L819 647.1 L820 646.2 L821 648.1 L822 645.7 L823 646.7 L824 645.7 L825 648.6 L826 646.6 L827 647.7 L828 647.1 L829 648.1 L830 645.7 L831 645.8 L832 647.7 L833 649.5 L834 647.5 L835 649.4 L836 649.8 L837 647.3 L838 648.6 L839 648.1 L840 650.9 L841 648.1 L842 649.1 L843 647.1 L844 645.5 L845 645.7 L846 649.9 L847 646.7 L848 646.1 L849 645.9 L850 645.7 L851 647.0 L852 649.4 L853 647.8 L854 648.0 L855 645.2 L856 648.0 L857 646.2 L858 645.8 L859 647.2 L860 645.8 L861 646.5 L862 645.7 L863 646.5 L864 649.7 L865 647.1 L866 648.8 L867 648.8 L868 646.3 L869 646.9 L870 647.9 L871 647.0 L872 646.0 L873 649.1 L874 647.7 L875 647.8 L876 646.3 L877 647.6 L878 644.7 L879 648.2 L880 649.8 L881 649.0 L882 646.8 L883 645.7 L884 647.9 L885 649.1 L886 647.9 L887 651.3 L888 646.0 L889 649.5 L890 650.1 L891 649.1 L892 645.9 L893 647.3 L894 651.1 L895 645.6 L896 647.9 L897 650.0 L898 647.4 L899 647.1 L900 646.6 L901 645.7 L902 645.0 L903 650.6 L904 647.9 L905 650.9 L906 648.6 L907 645.6 L908 647.6 L909 647.6 L910 647.8 L911 647.6 L912 647.8 L913 649.2 L914 648.0 L915 645.6 L916 640.2 L917 635.9 L918 636.4 L919 636.1 L920 644.8 L921 647.8 L922 646.0 L923 647.2 L924 647.8 L925 647.7 L926 647.4 L927 649.9 L928 645.7 L929 646.7 L930 647.1 L931 647.7 L932 647.2 L933 647.8 L934 647.8 L935 647.1 L936 647.5 L937 646.8 L938 647.7 L939 648.8 L940 648.8 L941 646.6 L942 647.6 L943 649.1 L944 646.8 L945 652.0 L946 646.7 L947 645.3 L948 648.2 L949 650.1 L950 647.9 L951 648.5 L952 648.7 L953 648.4 L954 649.4 L955 647.0 L956 642.9 L957 637.6 L958 636.0 L959 635.1 L960 637.6 L961 643.2 L962 648.8 L963 647.1 L964 645.9 L965 642.9 L966 644.8 L967 646.4 L968 645.1 L969 648.4 L970 648.4 L971 648.3 L972 648.9 L973 648.3 L974 648.8 L975 649.5 L976 648.6 L977 645.6 L978 647.4 L979 645.6 L980 647.6 L981 643.7 L982 643.9 L983 647.0 L984 648.2 L985 645.4 L986 649.0 L987 651.5 L988 649.8 L989 651.5 L990 650.9 L991 650.7 L992 651.5 L993 651.6 L994 653.4 L995 651.1 L996 653.3 L997 652.1 L998 652.2 L999 655.2 L1000 655.3 L1001 654.5 L1002 655.7 L1003 655.2 L1004 654.8 L1005 655.2 L1006 655.1 L1007 656.9 L1008 655.9 L1009 657.6 L1010 656.0 L1011 656.9 L1012 657.6 L1013 656.5 L1014 656.5 L1015 657.0 L1016 657.4 L1017 658.1 L1018 657.5 L1019 657.9 L1020 658.1 L1021 658.2 L1022 658.6 L1023 658.5 L1024 658.6 L1025 658.6 L1026 658.6 L1026 659 Z" fill="#10b112" shape-rendering="crispEdges"/>
<path d="M52 451h1v1h-1zM53 448h1v1h-1zM54 444h1v1h-1zM55 449h1v1h-1zM56 454h1v1h-1zM57 456h1v1h-1zM58 461h1v1h-1zM59 464h1v1h-1zM60 465h1v1h-1zM61 467h1v1h-1zM62 468h1v1h-1zM63 468h1v1h-1zM64 468h1v1h-1zM65 469h1v1h-1zM66 473h1v1h-1zM66 476h1v1h-1zM67 475h1v1h-1zM68 476h1v1h-1zM69 479h1v1h-1zM70 483h1v1h-1zM70 481h1v1h-1zM71 482h1v1h-1zM73 485h1v1h-1zM74 485h1v1h-1zM75 485h1v1h-1zM76 484h1v1h-1zM77 487h1v1h-1zM77 485h1v1h-1zM78 489h1v1h-1zM79 488h1v1h-1zM80 488h1v1h-1zM81 492h1v1h-1zM82 494h1v1h-1zM82 492h1v1h-1zM83 497h1v1h-1zM84 497h1v1h-1zM85 496h1v1h-1zM86 498h1v1h-1zM87 497h1v1h-1zM88 496h1v1h-1zM88 493h1v1h-1zM89 496h1v1h-1zM90 499h1v1h-1zM91 501h1v1h-1zM92 504h1v1h-1zM94 507h1v1h-1zM95 509h1v1h-1zM96 509h1v1h-1zM97 508h1v1h-1zM98 507h1v1h-1zM99 510h1v1h-1zM100 513h1v1h-1zM101 515h1v1h-1zM102 516h1v1h-1zM103 518h1v1h-1zM104 520h1v1h-1zM104 523h1v1h-1zM105 522h1v1h-1zM106 521h1v1h-1zM106 519h1v1h-1zM107 523h1v1h-1zM107 520h1v1h-1zM108 524h1v1h-1zM108 526h1v1h-1zM109 524h1v1h-1zM110 525h1v1h-1zM111 526h1v1h-1zM112 524h1v1h-1zM113 526h1v1h-1zM114 528h1v1h-1zM115 526h1v1h-1zM116 529h1v1h-1zM117 529h1v1h-1zM118 529h1v1h-1zM119 531h1v1h-1zM120 532h1v1h-1zM120 529h1v1h-1zM121 532h1v1h-1zM122 532h1v1h-1zM122 534h1v1h-1zM123 530h1v1h-1zM123 533h1v1h-1zM124 529h1v1h-1zM125 531h1v1h-1zM125 529h1v1h-1zM126 530h1v1h-1zM126 527h1v1h-1zM127 529h1v1h-1zM128 530h1v1h-1zM128 533h1v1h-1zM129 532h1v1h-1zM130 530h1v1h-1zM131 532h1v1h-1zM132 535h1v1h-1zM132 538h1v1h-1zM133 533h1v1h-1zM134 533h1v1h-1zM135 534h1v1h-1zM136 533h1v1h-1zM137 533h1v1h-1zM138 532h1v1h-1zM139 531h1v1h-1zM139 534h1v1h-1zM140 530h1v1h-1zM141 531h1v1h-1zM142 534h1v1h-1zM143 536h1v1h-1zM144 535h1v1h-1zM145 534h1v1h-1zM145 536h1v1h-1zM147 535h1v1h-1zM148 534h1v1h-1zM149 537h1v1h-1zM150 539h1v1h-1zM151 541h1v1h-1zM152 540h1v1h-1zM153 538h1v1h-1zM154 537h1v1h-1zM155 538h1v1h-1zM156 537h1v1h-1zM157 539h1v1h-1zM157 537h1v1h-1zM158 540h1v1h-1zM159 542h1v1h-1zM160 544h1v1h-1zM161 545h1v1h-1zM162 545h1v1h-1zM162 542h1v1h-1zM163 546h1v1h-1zM164 545h1v1h-1zM165 543h1v1h-1zM166 542h1v1h-1zM167 540h1v1h-1zM167 537h1v1h-1zM168 540h1v1h-1zM169 540h1v1h-1zM170 542h1v1h-1zM171 544h1v1h-1zM171 541h1v1h-1zM172 542h1v1h-1zM173 544h1v1h-1zM174 542h1v1h-1zM175 543h1v1h-1zM175 546h1v1h-1zM177 546h1v1h-1zM178 547h1v1h-1zM179 549h1v1h-1zM180 550h1v1h-1zM181 551h1v1h-1zM182 552h1v1h-1zM183 554h1v1h-1zM184 553h1v1h-1zM185 555h1v1h-1zM186 554h1v1h-1zM187 556h1v1h-1zM188 557h1v1h-1zM189 556h1v1h-1zM190 554h1v1h-1zM192 554h1v1h-1zM193 552h1v1h-1zM194 550h1v1h-1zM195 550h1v1h-1zM196 549h1v1h-1zM197 550h1v1h-1zM198 551h1v1h-1zM199 554h1v1h-1zM200 556h1v1h-1zM200 554h1v1h-1zM201 554h1v1h-1zM202 556h1v1h-1zM203 559h1v1h-1zM204 560h1v1h-1zM206 563h1v1h-1zM207 560h1v1h-1zM208 558h1v1h-1zM208 561h1v1h-1zM209 556h1v1h-1zM210 556h1v1h-1zM211 554h1v1h-1zM212 556h1v1h-1zM213 555h1v1h-1zM214 554h1v1h-1zM215 555h1v1h-1zM217 556h1v1h-1zM218 557h1v1h-1zM220 556h1v1h-1zM220 554h1v1h-1zM221 558h1v1h-1zM222 558h1v1h-1zM223 559h1v1h-1zM223 561h1v1h-1zM224 561h1v1h-1zM224 559h1v1h-1zM225 559h1v1h-1zM226 561h1v1h-1zM228 565h1v1h-1zM229 566h1v1h-1zM230 569h1v1h-1zM231 567h1v1h-1zM232 569h1v1h-1zM232 566h1v1h-1zM233 571h1v1h-1zM234 570h1v1h-1zM235 569h1v1h-1zM236 569h1v1h-1zM238 572h1v1h-1zM238 570h1v1h-1zM240 573h1v1h-1zM243 571h1v1h-1zM244 573h1v1h-1zM244 571h1v1h-1zM245 572h1v1h-1zM246 570h1v1h-1zM247 571h1v1h-1zM248 570h1v1h-1zM249 568h1v1h-1zM250 566h1v1h-1zM251 567h1v1h-1zM252 571h1v1h-1zM253 573h1v1h-1zM254 575h1v1h-1zM254 578h1v1h-1zM255 574h1v1h-1zM256 577h1v1h-1zM257 575h1v1h-1zM258 576h1v1h-1zM259 579h1v1h-1zM259 577h1v1h-1zM260 580h1v1h-1zM262 577h1v1h-1zM263 575h1v1h-1zM264 577h1v1h-1zM265 576h1v1h-1zM266 574h1v1h-1zM267 572h1v1h-1zM268 575h1v1h-1zM269 574h1v1h-1zM270 574h1v1h-1zM271 575h1v1h-1zM271 573h1v1h-1zM272 577h1v1h-1zM273 580h1v1h-1zM274 579h1v1h-1zM275 580h1v1h-1zM276 582h1v1h-1zM276 579h1v1h-1zM277 583h1v1h-1zM278 584h1v1h-1zM279 586h1v1h-1zM280 585h1v1h-1zM281 587h1v1h-1zM281 585h1v1h-1zM282 588h1v1h-1zM283 587h1v1h-1zM284 587h1v1h-1zM285 587h1v1h-1zM286 586h1v1h-1zM288 585h1v1h-1zM289 588h1v1h-1zM289 586h1v1h-1zM290 588h1v1h-1zM291 589h1v1h-1zM292 591h1v1h-1zM293 591h1v1h-1zM294 592h1v1h-1zM295 595h1v1h-1zM296 597h1v1h-1zM297 599h1v1h-1zM298 600h1v1h-1zM298 602h1v1h-1zM299 599h1v1h-1zM299 601h1v1h-1zM300 599h1v1h-1zM301 600h1v1h-1zM302 601h1v1h-1zM303 601h1v1h-1zM303 599h1v1h-1zM304 600h1v1h-1zM304 602h1v1h-1zM305 599h1v1h-1zM306 597h1v1h-1zM308 598h1v1h-1zM309 600h1v1h-1zM309 597h1v1h-1zM310 602h1v1h-1zM310 605h1v1h-1zM311 601h1v1h-1zM312 599h1v1h-1zM313 599h1v1h-1zM314 600h1v1h-1zM315 601h1v1h-1zM316 599h1v1h-1zM317 597h1v1h-1zM318 600h1v1h-1zM319 599h1v1h-1zM320 598h1v1h-1zM321 600h1v1h-1zM322 599h1v1h-1zM324 598h1v1h-1zM324 600h1v1h-1zM325 598h1v1h-1zM326 598h1v1h-1zM326 595h1v1h-1zM327 599h1v1h-1zM328 599h1v1h-1zM329 600h1v1h-1zM330 601h1v1h-1zM331 602h1v1h-1zM332 605h1v1h-1zM333 606h1v1h-1zM334 609h1v1h-1zM335 608h1v1h-1zM336 606h1v1h-1zM337 608h1v1h-1zM338 607h1v1h-1zM339 607h1v1h-1zM340 605h1v1h-1zM340 603h1v1h-1zM341 604h1v1h-1zM342 605h1v1h-1zM343 607h1v1h-1zM343 609h1v1h-1zM344 608h1v1h-1zM346 608h1v1h-1zM346 610h1v1h-1zM347 607h1v1h-1zM347 604h1v1h-1zM348 606h1v1h-1zM348 604h1v1h-1zM349 608h1v1h-1zM350 609h1v1h-1zM350 607h1v1h-1zM351 611h1v1h-1zM351 609h1v1h-1zM352 609h1v1h-1zM353 610h1v1h-1zM353 612h1v1h-1zM354 608h1v1h-1zM354 611h1v1h-1zM355 608h1v1h-1zM356 606h1v1h-1zM358 606h1v1h-1zM358 603h1v1h-1zM359 606h1v1h-1zM360 606h1v1h-1zM361 606h1v1h-1zM362 608h1v1h-1zM363 607h1v1h-1zM363 609h1v1h-1zM364 610h1v1h-1zM365 608h1v1h-1zM365 606h1v1h-1zM366 610h1v1h-1zM366 608h1v1h-1zM367 613h1v1h-1zM368 611h1v1h-1zM369 611h1v1h-1zM369 613h1v1h-1zM370 610h1v1h-1zM371 611h1v1h-1zM371 609h1v1h-1zM372 611h1v1h-1zM373 611h1v1h-1zM374 613h1v1h-1zM375 614h1v1h-1zM376 613h1v1h-1zM377 613h1v1h-1zM378 614h1v1h-1zM379 616h1v1h-1zM380 615h1v1h-1zM381 614h1v1h-1zM382 614h1v1h-1zM382 616h1v1h-1zM383 615h1v1h-1zM384 615h1v1h-1zM385 616h1v1h-1zM386 618h1v1h-1zM386 616h1v1h-1zM387 620h1v1h-1zM388 622h1v1h-1zM389 620h1v1h-1zM390 620h1v1h-1zM391 619h1v1h-1zM392 620h1v1h-1zM393 618h1v1h-1zM393 620h1v1h-1zM394 620h1v1h-1zM395 622h1v1h-1zM396 623h1v1h-1zM397 624h1v1h-1zM398 626h1v1h-1zM399 624h1v1h-1zM400 626h1v1h-1zM401 625h1v1h-1zM402 624h1v1h-1zM402 621h1v1h-1zM403 622h1v1h-1zM404 621h1v1h-1zM404 624h1v1h-1zM405 622h1v1h-1zM406 624h1v1h-1zM406 622h1v1h-1zM407 623h1v1h-1zM409 621h1v1h-1zM409 623h1v1h-1zM410 622h1v1h-1zM411 623h1v1h-1zM412 621h1v1h-1zM413 621h1v1h-1zM414 622h1v1h-1zM414 624h1v1h-1zM415 624h1v1h-1zM416 622h1v1h-1zM417 622h1v1h-1zM418 622h1v1h-1zM419 620h1v1h-1zM420 624h1v1h-1zM421 624h1v1h-1zM422 626h1v1h-1zM423 629h1v1h-1zM424 631h1v1h-1zM424 629h1v1h-1zM426 631h1v1h-1zM427 631h1v1h-1zM428 630h1v1h-1zM429 629h1v1h-1zM430 631h1v1h-1zM431 630h1v1h-1zM431 627h1v1h-1zM432 632h1v1h-1zM433 633h1v1h-1zM434 631h1v1h-1zM435 632h1v1h-1zM436 633h1v1h-1zM437 633h1v1h-1zM438 634h1v1h-1zM439 632h1v1h-1zM440 631h1v1h-1zM441 630h1v1h-1zM442 631h1v1h-1zM442 629h1v1h-1zM443 632h1v1h-1zM443 629h1v1h-1zM444 631h1v1h-1zM445 629h1v1h-1zM445 626h1v1h-1zM446 630h1v1h-1zM447 631h1v1h-1zM447 629h1v1h-1zM448 632h1v1h-1zM449 630h1v1h-1zM450 632h1v1h-1zM451 633h1v1h-1zM452 632h1v1h-1zM452 629h1v1h-1zM453 631h1v1h-1zM454 633h1v1h-1zM455 631h1v1h-1zM456 632h1v1h-1zM457 631h1v1h-1zM458 631h1v1h-1zM459 633h1v1h-1zM461 631h1v1h-1zM462 631h1v1h-1zM463 631h1v1h-1zM464 632h1v1h-1zM464 629h1v1h-1zM465 632h1v1h-1zM465 635h1v1h-1zM466 632h1v1h-1zM467 634h1v1h-1zM468 635h1v1h-1zM468 637h1v1h-1zM469 637h1v1h-1zM469 634h1v1h-1zM470 638h1v1h-1zM471 637h1v1h-1zM472 638h1v1h-1zM473 637h1v1h-1zM474 636h1v1h-1zM474 634h1v1h-1zM476 635h1v1h-1zM476 638h1v1h-1zM477 634h1v1h-1zM478 635h1v1h-1zM479 634h1v1h-1zM479 637h1v1h-1zM480 634h1v1h-1zM481 636h1v1h-1zM481 633h1v1h-1zM482 637h1v1h-1zM483 640h1v1h-1zM484 638h1v1h-1zM485 640h1v1h-1zM486 641h1v1h-1zM487 640h1v1h-1zM488 638h1v1h-1zM489 637h1v1h-1zM490 636h1v1h-1zM490 633h1v1h-1zM491 637h1v1h-1zM491 639h1v1h-1zM493 637h1v1h-1zM493 640h1v1h-1zM494 636h1v1h-1zM495 638h1v1h-1zM496 640h1v1h-1zM497 642h1v1h-1zM498 641h1v1h-1zM499 640h1v1h-1zM500 643h1v1h-1zM501 642h1v1h-1zM501 645h1v1h-1zM502 640h1v1h-1zM502 643h1v1h-1z" fill="#efd262" shape-rendering="crispEdges"/>
<path d="M503 642h1v1h-1zM504 641h1v1h-1zM505 642h1v1h-1zM506 643h1v1h-1zM507 642h1v1h-1zM508 641h1v1h-1zM509 643h1v1h-1zM510 642h1v1h-1zM511 642h1v1h-1zM512 641h1v1h-1zM513 643h1v1h-1zM514 642h1v1h-1zM515 643h1v1h-1zM516 643h1v1h-1zM517 642h1v1h-1zM518 641h1v1h-1zM519 642h1v1h-1zM520 641h1v1h-1zM521 641h1v1h-1zM522 643h1v1h-1zM523 642h1v1h-1zM524 643h1v1h-1zM525 642h1v1h-1zM526 641h1v1h-1zM527 643h1v1h-1zM528 642h1v1h-1zM529 643h1v1h-1zM530 642h1v1h-1zM531 643h1v1h-1zM532 641h1v1h-1zM533 642h1v1h-1zM534 641h1v1h-1zM535 643h1v1h-1zM536 642h1v1h-1zM537 643h1v1h-1zM538 642h1v1h-1zM539 642h1v1h-1zM540 641h1v1h-1zM541 642h1v1h-1zM542 642h1v1h-1zM543 642h1v1h-1zM544 642h1v1h-1zM545 643h1v1h-1zM546 642h1v1h-1zM547 643h1v1h-1zM548 642h1v1h-1zM549 641h1v1h-1zM550 642h1v1h-1zM551 642h1v1h-1zM552 642h1v1h-1zM553 641h1v1h-1zM554 643h1v1h-1zM555 641h1v1h-1zM556 642h1v1h-1zM557 641h1v1h-1zM558 642h1v1h-1zM559 643h1v1h-1zM560 641h1v1h-1zM561 642h1v1h-1zM562 643h1v1h-1zM563 641h1v1h-1zM564 642h1v1h-1zM565 642h1v1h-1zM566 642h1v1h-1zM567 642h1v1h-1zM568 643h1v1h-1zM569 642h1v1h-1zM570 641h1v1h-1zM571 641h1v1h-1zM572 642h1v1h-1zM573 642h1v1h-1zM574 643h1v1h-1zM575 642h1v1h-1zM576 643h1v1h-1zM577 642h1v1h-1zM578 642h1v1h-1zM579 641h1v1h-1zM580 642h1v1h-1zM581 641h1v1h-1zM582 642h1v1h-1zM583 642h1v1h-1zM584 642h1v1h-1zM585 643h1v1h-1zM586 642h1v1h-1zM587 642h1v1h-1zM588 642h1v1h-1zM589 643h1v1h-1zM590 642h1v1h-1zM591 642h1v1h-1zM592 641h1v1h-1zM593 641h1v1h-1zM594 642h1v1h-1zM595 642h1v1h-1zM596 642h1v1h-1zM597 644h1v1h-1zM598 643h1v1h-1zM599 642h1v1h-1zM600 644h1v1h-1zM601 644h1v1h-1zM602 643h1v1h-1zM603 643h1v1h-1zM604 642h1v1h-1zM605 643h1v1h-1zM606 643h1v1h-1zM607 643h1v1h-1zM608 643h1v1h-1zM609 643h1v1h-1zM610 644h1v1h-1zM611 643h1v1h-1zM612 644h1v1h-1zM613 642h1v1h-1zM614 643h1v1h-1zM615 644h1v1h-1zM616 642h1v1h-1zM617 643h1v1h-1zM618 642h1v1h-1zM619 643h1v1h-1zM620 643h1v1h-1zM621 642h1v1h-1zM622 644h1v1h-1zM623 643h1v1h-1zM624 643h1v1h-1zM625 643h1v1h-1zM626 643h1v1h-1zM627 643h1v1h-1zM628 643h1v1h-1zM629 644h1v1h-1zM630 643h1v1h-1zM631 643h1v1h-1zM632 643h1v1h-1zM633 642h1v1h-1zM634 643h1v1h-1zM635 644h1v1h-1zM636 642h1v1h-1zM637 643h1v1h-1zM638 643h1v1h-1zM639 644h1v1h-1zM640 642h1v1h-1zM641 643h1v1h-1zM642 643h1v1h-1zM643 644h1v1h-1zM644 642h1v1h-1zM645 642h1v1h-1zM646 642h1v1h-1zM647 643h1v1h-1zM648 644h1v1h-1zM649 643h1v1h-1zM650 644h1v1h-1zM651 644h1v1h-1zM652 644h1v1h-1zM653 644h1v1h-1zM654 643h1v1h-1zM655 643h1v1h-1zM656 644h1v1h-1zM657 642h1v1h-1zM658 642h1v1h-1zM659 644h1v1h-1zM660 643h1v1h-1zM661 642h1v1h-1zM662 644h1v1h-1zM663 644h1v1h-1zM664 643h1v1h-1zM665 643h1v1h-1zM666 642h1v1h-1zM667 643h1v1h-1zM668 642h1v1h-1zM669 644h1v1h-1zM670 644h1v1h-1zM671 642h1v1h-1zM672 644h1v1h-1zM673 644h1v1h-1zM674 643h1v1h-1zM675 643h1v1h-1zM676 643h1v1h-1zM677 644h1v1h-1zM678 643h1v1h-1zM679 643h1v1h-1zM680 642h1v1h-1zM681 644h1v1h-1zM682 642h1v1h-1zM683 644h1v1h-1zM684 643h1v1h-1zM685 643h1v1h-1zM686 644h1v1h-1zM687 643h1v1h-1zM688 644h1v1h-1zM689 644h1v1h-1zM690 643h1v1h-1zM691 644h1v1h-1zM692 642h1v1h-1zM693 642h1v1h-1zM694 642h1v1h-1zM695 644h1v1h-1zM696 642h1v1h-1zM697 643h1v1h-1zM698 643h1v1h-1zM699 644h1v1h-1zM700 643h1v1h-1zM701 644h1v1h-1zM702 643h1v1h-1zM703 644h1v1h-1zM704 642h1v1h-1zM705 642h1v1h-1zM706 643h1v1h-1zM707 644h1v1h-1zM708 643h1v1h-1zM709 642h1v1h-1zM710 644h1v1h-1zM711 643h1v1h-1zM712 643h1v1h-1zM713 643h1v1h-1zM714 643h1v1h-1zM715 644h1v1h-1zM716 644h1v1h-1zM717 643h1v1h-1zM718 644h1v1h-1zM719 642h1v1h-1zM720 642h1v1h-1zM721 644h1v1h-1zM722 642h1v1h-1zM723 644h1v1h-1zM724 643h1v1h-1zM725 643h1v1h-1zM726 643h1v1h-1zM727 644h1v1h-1zM728 643h1v1h-1zM729 642h1v1h-1zM730 644h1v1h-1zM731 642h1v1h-1zM732 644h1v1h-1zM733 643h1v1h-1zM734 643h1v1h-1zM735 644h1v1h-1zM736 642h1v1h-1zM737 644h1v1h-1zM738 644h1v1h-1zM739 642h1v1h-1zM740 642h1v1h-1zM741 642h1v1h-1zM742 643h1v1h-1zM743 642h1v1h-1zM744 643h1v1h-1zM745 643h1v1h-1zM746 643h1v1h-1zM747 643h1v1h-1zM748 642h1v1h-1zM749 644h1v1h-1zM750 643h1v1h-1zM751 643h1v1h-1zM752 643h1v1h-1zM753 642h1v1h-1zM754 644h1v1h-1zM755 642h1v1h-1zM756 644h1v1h-1zM757 643h1v1h-1zM758 643h1v1h-1zM759 643h1v1h-1zM760 643h1v1h-1zM761 643h1v1h-1zM762 643h1v1h-1zM763 644h1v1h-1zM764 643h1v1h-1zM765 644h1v1h-1zM766 642h1v1h-1zM767 643h1v1h-1zM768 643h1v1h-1zM769 642h1v1h-1zM770 644h1v1h-1zM771 643h1v1h-1zM772 643h1v1h-1zM773 643h1v1h-1zM774 643h1v1h-1zM775 642h1v1h-1zM776 642h1v1h-1zM777 643h1v1h-1zM778 644h1v1h-1zM779 644h1v1h-1zM780 642h1v1h-1zM781 642h1v1h-1zM782 643h1v1h-1zM783 644h1v1h-1zM784 643h1v1h-1zM785 642h1v1h-1zM786 643h1v1h-1zM787 643h1v1h-1zM788 642h1v1h-1zM789 642h1v1h-1zM790 643h1v1h-1zM791 644h1v1h-1zM792 643h1v1h-1zM793 643h1v1h-1zM794 644h1v1h-1zM795 642h1v1h-1zM796 644h1v1h-1zM797 643h1v1h-1zM798 643h1v1h-1zM799 642h1v1h-1zM800 644h1v1h-1zM801 643h1v1h-1zM802 642h1v1h-1zM803 643h1v1h-1zM804 643h1v1h-1zM805 642h1v1h-1zM806 644h1v1h-1zM807 642h1v1h-1zM808 644h1v1h-1zM809 642h1v1h-1zM810 643h1v1h-1zM811 643h1v1h-1zM812 644h1v1h-1zM813 643h1v1h-1zM814 642h1v1h-1zM815 642h1v1h-1zM816 642h1v1h-1zM817 644h1v1h-1zM818 643h1v1h-1zM819 643h1v1h-1zM820 643h1v1h-1zM821 644h1v1h-1zM822 642h1v1h-1zM823 642h1v1h-1zM824 643h1v1h-1zM825 644h1v1h-1zM826 643h1v1h-1zM827 642h1v1h-1zM828 643h1v1h-1zM829 642h1v1h-1zM830 643h1v1h-1zM831 642h1v1h-1zM832 642h1v1h-1zM833 643h1v1h-1zM834 644h1v1h-1zM835 644h1v1h-1zM836 643h1v1h-1zM837 642h1v1h-1zM838 643h1v1h-1zM839 644h1v1h-1zM840 642h1v1h-1zM841 643h1v1h-1zM842 643h1v1h-1zM843 644h1v1h-1zM844 644h1v1h-1zM845 642h1v1h-1zM846 643h1v1h-1zM847 643h1v1h-1zM848 644h1v1h-1zM849 642h1v1h-1zM850 643h1v1h-1zM851 643h1v1h-1zM852 643h1v1h-1zM853 644h1v1h-1zM854 644h1v1h-1zM855 643h1v1h-1zM856 642h1v1h-1zM857 643h1v1h-1zM858 643h1v1h-1zM859 644h1v1h-1zM860 644h1v1h-1zM861 644h1v1h-1zM862 644h1v1h-1zM863 642h1v1h-1zM864 644h1v1h-1zM865 642h1v1h-1zM866 644h1v1h-1zM867 643h1v1h-1zM868 643h1v1h-1zM869 642h1v1h-1zM870 643h1v1h-1zM871 642h1v1h-1zM872 643h1v1h-1zM873 644h1v1h-1zM874 644h1v1h-1zM875 642h1v1h-1zM876 643h1v1h-1zM877 644h1v1h-1zM878 644h1v1h-1zM879 643h1v1h-1zM880 644h1v1h-1zM881 643h1v1h-1zM882 643h1v1h-1zM883 642h1v1h-1zM884 643h1v1h-1zM885 642h1v1h-1zM886 642h1v1h-1zM887 643h1v1h-1zM888 643h1v1h-1zM889 644h1v1h-1zM890 644h1v1h-1zM891 643h1v1h-1zM892 642h1v1h-1zM893 642h1v1h-1zM894 644h1v1h-1zM895 642h1v1h-1zM896 643h1v1h-1zM897 642h1v1h-1zM898 644h1v1h-1zM899 644h1v1h-1zM900 643h1v1h-1zM901 642h1v1h-1zM902 642h1v1h-1zM903 642h1v1h-1zM904 643h1v1h-1zM905 643h1v1h-1zM906 644h1v1h-1zM907 643h1v1h-1zM908 643h1v1h-1zM909 643h1v1h-1zM910 643h1v1h-1zM911 643h1v1h-1zM912 643h1v1h-1zM913 643h1v1h-1zM914 643h1v1h-1zM915 642h1v1h-1zM916 642h1v1h-1zM917 642h1v1h-1zM918 642h1v1h-1zM919 643h1v1h-1zM920 643h1v1h-1zM921 643h1v1h-1zM922 644h1v1h-1zM923 642h1v1h-1zM924 643h1v1h-1zM925 643h1v1h-1zM926 642h1v1h-1zM927 643h1v1h-1zM928 643h1v1h-1zM929 644h1v1h-1zM930 642h1v1h-1zM931 643h1v1h-1zM932 642h1v1h-1zM933 643h1v1h-1zM934 643h1v1h-1zM935 643h1v1h-1zM936 643h1v1h-1zM937 644h1v1h-1zM938 643h1v1h-1zM939 644h1v1h-1zM940 643h1v1h-1zM941 642h1v1h-1zM942 642h1v1h-1zM943 643h1v1h-1zM944 642h1v1h-1zM945 642h1v1h-1zM946 644h1v1h-1zM947 643h1v1h-1zM948 642h1v1h-1zM949 643h1v1h-1zM950 642h1v1h-1zM951 642h1v1h-1zM952 643h1v1h-1zM953 643h1v1h-1zM954 643h1v1h-1zM955 642h1v1h-1zM956 643h1v1h-1zM957 643h1v1h-1zM958 642h1v1h-1zM959 643h1v1h-1zM960 643h1v1h-1zM961 643h1v1h-1zM962 642h1v1h-1zM963 642h1v1h-1zM964 643h1v1h-1zM965 644h1v1h-1zM966 643h1v1h-1zM967 643h1v1h-1zM968 643h1v1h-1zM969 644h1v1h-1zM970 644h1v1h-1zM971 644h1v1h-1zM972 644h1v1h-1zM973 645h1v1h-1zM974 645h1v1h-1zM975 645h1v1h-1zM976 644h1v1h-1zM977 643h1v1h-1zM978 642h1v1h-1zM979 642h1v1h-1zM980 642h1v1h-1zM981 643h1v1h-1zM982 644h1v1h-1zM983 645h1v1h-1zM984 645h1v1h-1zM985 646h1v1h-1zM986 646h1v1h-1zM987 647h1v1h-1zM988 647h1v1h-1zM989 647h1v1h-1zM990 648h1v1h-1zM991 648h1v1h-1zM992 649h1v1h-1zM993 649h1v1h-1zM994 649h1v1h-1zM995 650h1v1h-1zM996 650h1v1h-1zM997 651h1v1h-1zM998 651h1v1h-1zM999 651h1v1h-1zM1000 652h1v1h-1zM1001 652h1v1h-1zM1002 653h1v1h-1zM1003 653h1v1h-1zM1004 653h1v1h-1zM1005 653h1v1h-1zM1006 654h1v1h-1zM1007 654h1v1h-1zM1008 654h1v1h-1zM1009 655h1v1h-1zM1010 655h1v1h-1zM1011 655h1v1h-1zM1012 656h1v1h-1zM1013 656h1v1h-1zM1014 656h1v1h-1zM1015 656h1v1h-1zM1016 656h1v1h-1zM1017 657h1v1h-1zM1018 657h1v1h-1zM1019 657h1v1h-1zM1020 657h1v1h-1zM1021 657h1v1h-1zM1022 657h1v1h-1zM1023 658h1v1h-1zM1024 658h1v1h-1zM1025 658h1v1h-1zM1026 658h1v1h-1zM1026 658h51v1h-51z" fill="#f0b264" shape-rendering="crispEdges"/>
<path d="M627 640h1v1h-1zM628 637h1v1h-1zM629 633h1v1h-1zM630 637h1v1h-1zM631 640h1v1h-1zM655 639h1v1h-1zM656 636h1v1h-1zM657 632h1v1h-1zM658 636h1v1h-1zM659 639h1v1h-1zM915 639h1v1h-1zM916 636h1v1h-1zM917 632h1v1h-1zM918 636h1v1h-1zM919 639h1v1h-1zM957 637h1v1h-1zM958 634h1v1h-1zM959 630h1v1h-1zM960 634h1v1h-1zM961 637h1v1h-1z" fill="#f0a860" shape-rendering="crispEdges"/>
<g shape-rendering="crispEdges">
<rect x="308" y="659" width="1" height="5" fill="#fff"/>
<rect x="564" y="659" width="1" height="5" fill="#fff"/>
<rect x="820" y="659" width="1" height="5" fill="#fff"/>
<rect x="1076" y="659" width="1" height="5" fill="#fff"/>
</g>
<text x="56.5" y="675" fill="#35cf35">Linear Frequency Spectrum [kHz]</text>
<text x="308" y="678" fill="#fff" text-anchor="middle">24.0</text>
<text x="564" y="678" fill="#fff" text-anchor="middle">48.0</text>
<text x="820" y="678" fill="#fff" text-anchor="middle">72.0</text>
<text x="1076" y="678" fill="#fff" text-anchor="middle">96.0</text>
<text x="346" y="675" fill="#707070">Left/Right</text>
<text x="446" y="675" fill="#707070">Pano/Phase</text>
<text x="640.5" y="675" fill="#707070">-200dB Mode</text>
<text x="20" y="716" fill="#777">%</text>
<text x="48" y="716" fill="#fff" text-anchor="end">0</text>
<text x="25.5" y="743" fill="#35cf35" textLength="23" lengthAdjust="spacingAndGlyphs">MAX</text>
<text x="48" y="773" fill="#fff" text-anchor="end">-25</text>
<defs>
<linearGradient id="s0" gradientUnits="userSpaceOnUse" x1="52" x2="1024"><stop offset="0.0000" stop-color="#e54032"/><stop offset="0.0031" stop-color="#e53048"/><stop offset="0.0051" stop-color="#de2763"/><stop offset="0.0082" stop-color="#c91c9e"/><stop offset="0.0113" stop-color="#9e17c4"/><stop offset="0.0144" stop-color="#8914d1"/><stop offset="0.0185" stop-color="#7d13d4"/><stop offset="0.0226" stop-color="#7111d6"/><stop offset="0.0278" stop-color="#650fd6"/><stop offset="0.0340" stop-color="#5c0fd0"/><stop offset="0.0412" stop-color="#520ec9"/><stop offset="0.0514" stop-color="#430dbd"/><stop offset="0.0617" stop-color="#340cb0"/><stop offset="0.0720" stop-color="#260ba0"/><stop offset="0.0823" stop-color="#190a90"/><stop offset="0.0947" stop-color="#130a85"/><stop offset="0.1029" stop-color="#0f097f"/><stop offset="0.1132" stop-color="#0a0976"/><stop offset="0.1286" stop-color="#09076f"/><stop offset="0.1440" stop-color="#070668"/><stop offset="0.1646" stop-color="#05055f"/><stop offset="0.1852" stop-color="#040457"/><stop offset="0.2058" stop-color="#03034e"/><stop offset="0.2263" stop-color="#020246"/><stop offset="0.2521" stop-color="#020243"/><stop offset="0.2778" stop-color="#020240"/><stop offset="0.3086" stop-color="#01013d"/><stop offset="0.3395" stop-color="#01013c"/><stop offset="0.3755" stop-color="#01013b"/><stop offset="0.4115" stop-color="#01013a"/><stop offset="0.4630" stop-color="#010139"/><stop offset="0.5144" stop-color="#010138"/><stop offset="0.6173" stop-color="#000036"/><stop offset="0.7202" stop-color="#000035"/><stop offset="0.8230" stop-color="#000034"/><stop offset="0.9568" stop-color="#000032"/><stop offset="0.9774" stop-color="#00001a"/><stop offset="1.0000" stop-color="#000000"/></linearGradient>
<linearGradient id="s1" gradientUnits="userSpaceOnUse" x1="52" x2="1024"><stop offset="0.0000" stop-color="#ff4838"/><stop offset="0.0031" stop-color="#ff3650"/><stop offset="0.0051" stop-color="#f72c6e"/><stop offset="0.0082" stop-color="#e020b0"/><stop offset="0.0113" stop-color="#b01ada"/><stop offset="0.0144" stop-color="#9917e9"/><stop offset="0.0185" stop-color="#8b15eb"/><stop offset="0.0226" stop-color="#7e13ee"/><stop offset="0.0278" stop-color="#7011ed"/><stop offset="0.0340" stop-color="#6710e7"/><stop offset="0.0412" stop-color="#5c10e0"/><stop offset="0.0514" stop-color="#4b0fd2"/><stop offset="0.0617" stop-color="#3a0ec4"/><stop offset="0.0720" stop-color="#2b0db2"/><stop offset="0.0823" stop-color="#1c0ca0"/><stop offset="0.0947" stop-color="#150b94"/><stop offset="0.1029" stop-color="#110a8d"/><stop offset="0.1132" stop-color="#0c0a84"/><stop offset="0.1286" stop-color="#0a087c"/><stop offset="0.1440" stop-color="#080774"/><stop offset="0.1646" stop-color="#06066a"/><stop offset="0.1852" stop-color="#050560"/><stop offset="0.2058" stop-color="#040457"/><stop offset="0.2263" stop-color="#03034e"/><stop offset="0.2521" stop-color="#02024a"/><stop offset="0.2778" stop-color="#020247"/><stop offset="0.3086" stop-color="#020244"/><stop offset="0.3395" stop-color="#010143"/><stop offset="0.3755" stop-color="#010142"/><stop offset="0.4115" stop-color="#010141"/><stop offset="0.4630" stop-color="#010140"/><stop offset="0.5144" stop-color="#01013e"/><stop offset="0.6173" stop-color="#01013c"/><stop offset="0.7202" stop-color="#01013a"/><stop offset="0.8230" stop-color="#010139"/><stop offset="0.9568" stop-color="#010138"/><stop offset="0.9774" stop-color="#00001d"/><stop offset="1.0000" stop-color="#000000"/></linearGradient>
<linearGradient id="s2" gradientUnits="userSpaceOnUse" x1="52" x2="1024"><stop offset="0.0000" stop-color="#ff4838"/><stop offset="0.0031" stop-color="#ff3650"/><stop offset="0.0051" stop-color="#f72c6e"/><stop offset="0.0082" stop-color="#e020b0"/><stop offset="0.0113" stop-color="#b01ada"/><stop offset="0.0144" stop-color="#9917e9"/><stop offset="0.0185" stop-color="#8b15eb"/><stop offset="0.0226" stop-color="#7e13ee"/><stop offset="0.0278" stop-color="#7011ed"/><stop offset="0.0340" stop-color="#6710e7"/><stop offset="0.0412" stop-color="#5c10e0"/><stop offset="0.0514" stop-color="#4b0fd2"/><stop offset="0.0617" stop-color="#3a0ec4"/><stop offset="0.0720" stop-color="#2b0db2"/><stop offset="0.0823" stop-color="#1c0ca0"/><stop offset="0.0947" stop-color="#150b94"/><stop offset="0.1029" stop-color="#110a8d"/><stop offset="0.1132" stop-color="#0c0a84"/><stop offset="0.1286" stop-color="#0a087c"/><stop offset="0.1440" stop-color="#080774"/><stop offset="0.1646" stop-color="#06066a"/><stop offset="0.1852" stop-color="#050560"/><stop offset="0.2058" stop-color="#040457"/><stop offset="0.2263" stop-color="#03034e"/><stop offset="0.2521" stop-color="#02024a"/><stop offset="0.2778" stop-color="#020247"/><stop offset="0.3086" stop-color="#020244"/><stop offset="0.3395" stop-color="#010143"/><stop offset="0.3755" stop-color="#010142"/><stop offset="0.4115" stop-color="#010141"/><stop offset="0.4630" stop-color="#010140"/><stop offset="0.5144" stop-color="#01013e"/><stop offset="0.6173" stop-color="#01013c"/><stop offset="0.7202" stop-color="#01013a"/><stop offset="0.8230" stop-color="#010139"/><stop offset="0.9568" stop-color="#010138"/><stop offset="0.9774" stop-color="#00001d"/><stop offset="1.0000" stop-color="#000000"/></linearGradient>
<linearGradient id="s3" gradientUnits="userSpaceOnUse" x1="52" x2="1024"><stop offset="0.0000" stop-color="#ff4838"/><stop offset="0.0031" stop-color="#ff3650"/><stop offset="0.0051" stop-color="#f72c6e"/><stop offset="0.0082" stop-color="#e020b0"/><stop offset="0.0113" stop-color="#b01ada"/><stop offset="0.0144" stop-color="#9917e9"/><stop offset="0.0185" stop-color="#8b15eb"/><stop offset="0.0226" stop-color="#7e13ee"/><stop offset="0.0278" stop-color="#7011ed"/><stop offset="0.0340" stop-color="#6710e7"/><stop offset="0.0412" stop-color="#5c10e0"/><stop offset="0.0514" stop-color="#4b0fd2"/><stop offset="0.0617" stop-color="#3a0ec4"/><stop offset="0.0720" stop-color="#2b0db2"/><stop offset="0.0823" stop-color="#1c0ca0"/><stop offset="0.0947" stop-color="#150b94"/><stop offset="0.1029" stop-color="#110a8d"/><stop offset="0.1132" stop-color="#0c0a84"/><stop offset="0.1286" stop-color="#0a087c"/><stop offset="0.1440" stop-color="#080774"/><stop offset="0.1646" stop-color="#06066a"/><stop offset="0.1852" stop-color="#050560"/><stop offset="0.2058" stop-color="#040457"/><stop offset="0.2263" stop-color="#03034e"/><stop offset="0.2521" stop-color="#02024a"/><stop offset="0.2778" stop-color="#020247"/><stop offset="0.3086" stop-color="#020244"/><stop offset="0.3395" stop-color="#010143"/><stop offset="0.3755" stop-color="#010142"/><stop offset="0.4115" stop-color="#010141"/><stop offset="0.4630" stop-color="#010140"/><stop offset="0.5144" stop-color="#01013e"/><stop offset="0.6173" stop-color="#01013c"/><stop offset="0.7202" stop-color="#01013a"/><stop offset="0.8230" stop-color="#010139"/><stop offset="0.9568" stop-color="#010138"/><stop offset="0.9774" stop-color="#00001d"/><stop offset="1.0000" stop-color="#000000"/></linearGradient>
<linearGradient id="s4" gradientUnits="userSpaceOnUse" x1="52" x2="1024"><stop offset="0.0000" stop-color="#ff4c34"/><stop offset="0.0031" stop-color="#ff374f"/><stop offset="0.0051" stop-color="#f82c6d"/><stop offset="0.0082" stop-color="#e420ac"/><stop offset="0.0113" stop-color="#b71ad6"/><stop offset="0.0144" stop-color="#a017e5"/><stop offset="0.0185" stop-color="#9115e9"/><stop offset="0.0226" stop-color="#8213ed"/><stop offset="0.0278" stop-color="#7411ee"/><stop offset="0.0340" stop-color="#6c10ea"/><stop offset="0.0412" stop-color="#6310e6"/><stop offset="0.0514" stop-color="#540fda"/><stop offset="0.0617" stop-color="#450fce"/><stop offset="0.0720" stop-color="#360ebf"/><stop offset="0.0823" stop-color="#280eb0"/><stop offset="0.0947" stop-color="#200da7"/><stop offset="0.1029" stop-color="#1c0da1"/><stop offset="0.1132" stop-color="#160d9a"/><stop offset="0.1286" stop-color="#120b92"/><stop offset="0.1440" stop-color="#0f0a8b"/><stop offset="0.1646" stop-color="#0b0981"/><stop offset="0.1852" stop-color="#080777"/><stop offset="0.2058" stop-color="#06066d"/><stop offset="0.2263" stop-color="#040464"/><stop offset="0.2521" stop-color="#04045e"/><stop offset="0.2778" stop-color="#030358"/><stop offset="0.3086" stop-color="#030352"/><stop offset="0.3395" stop-color="#02024f"/><stop offset="0.3755" stop-color="#02024c"/><stop offset="0.4115" stop-color="#020249"/><stop offset="0.4630" stop-color="#010145"/><stop offset="0.5144" stop-color="#010142"/><stop offset="0.6173" stop-color="#01013d"/><stop offset="0.7202" stop-color="#01013b"/><stop offset="0.8230" stop-color="#01013a"/><stop offset="0.9568" stop-color="#010138"/><stop offset="0.9774" stop-color="#00001d"/><stop offset="1.0000" stop-color="#000000"/></linearGradient>
<linearGradient id="s5" gradientUnits="userSpaceOnUse" x1="52" x2="1024"><stop offset="0.0000" stop-color="#ff5030"/><stop offset="0.0031" stop-color="#ff384e"/><stop offset="0.0051" stop-color="#f92c6c"/><stop offset="0.0082" stop-color="#e820a8"/><stop offset="0.0113" stop-color="#be1ad2"/><stop offset="0.0144" stop-color="#a717e2"/><stop offset="0.0185" stop-color="#9715e7"/><stop offset="0.0226" stop-color="#8613ec"/><stop offset="0.0278" stop-color="#7711ef"/><stop offset="0.0340" stop-color="#7110ed"/><stop offset="0.0412" stop-color="#6a10ec"/><stop offset="0.0514" stop-color="#5d10e2"/><stop offset="0.0617" stop-color="#5010d8"/><stop offset="0.0720" stop-color="#4210cc"/><stop offset="0.0823" stop-color="#3410c0"/><stop offset="0.0947" stop-color="#2c10b9"/><stop offset="0.1029" stop-color="#2610b5"/><stop offset="0.1132" stop-color="#2010b0"/><stop offset="0.1286" stop-color="#1b0ea8"/><stop offset="0.1440" stop-color="#160da1"/><stop offset="0.1646" stop-color="#100c98"/><stop offset="0.1852" stop-color="#0c0a8e"/><stop offset="0.2058" stop-color="#090884"/><stop offset="0.2263" stop-color="#06067a"/><stop offset="0.2521" stop-color="#050571"/><stop offset="0.2778" stop-color="#040469"/><stop offset="0.3086" stop-color="#040460"/><stop offset="0.3395" stop-color="#03035b"/><stop offset="0.3755" stop-color="#030356"/><stop offset="0.4115" stop-color="#020251"/><stop offset="0.4630" stop-color="#02024a"/><stop offset="0.5144" stop-color="#010146"/><stop offset="0.6173" stop-color="#01013e"/><stop offset="0.7202" stop-color="#01013c"/><stop offset="0.8230" stop-color="#01013a"/><stop offset="0.9568" stop-color="#010138"/><stop offset="0.9774" stop-color="#00001d"/><stop offset="1.0000" stop-color="#000000"/></linearGradient>
<linearGradient id="s6" gradientUnits="userSpaceOnUse" x1="52" x2="1024"><stop offset="0.0000" stop-color="#ff5030"/><stop offset="0.0031" stop-color="#ff384e"/><stop offset="0.0051" stop-color="#f92c6c"/><stop offset="0.0082" stop-color="#e820a8"/><stop offset="0.0113" stop-color="#be1ad2"/><stop offset="0.0144" stop-color="#a717e2"/><stop offset="0.0185" stop-color="#9715e7"/><stop offset="0.0226" stop-color="#8613ec"/><stop offset="0.0278" stop-color="#7711ef"/><stop offset="0.0340" stop-color="#7110ed"/><stop offset="0.0412" stop-color="#6a10ec"/><stop offset="0.0514" stop-color="#5d10e2"/><stop offset="0.0617" stop-color="#5010d8"/><stop offset="0.0720" stop-color="#4210cc"/><stop offset="0.0823" stop-color="#3410c0"/><stop offset="0.0947" stop-color="#2c10b9"/><stop offset="0.1029" stop-color="#2610b5"/><stop offset="0.1132" stop-color="#2010b0"/><stop offset="0.1286" stop-color="#1b0ea8"/><stop offset="0.1440" stop-color="#160da1"/><stop offset="0.1646" stop-color="#100c98"/><stop offset="0.1852" stop-color="#0c0a8e"/><stop offset="0.2058" stop-color="#090884"/><stop offset="0.2263" stop-color="#06067a"/><stop offset="0.2521" stop-color="#050571"/><stop offset="0.2778" stop-color="#040469"/><stop offset="0.3086" stop-color="#040460"/><stop offset="0.3395" stop-color="#03035b"/><stop offset="0.3755" stop-color="#030356"/><stop offset="0.4115" stop-color="#020251"/><stop offset="0.4630" stop-color="#02024a"/><stop offset="0.5144" stop-color="#010146"/><stop offset="0.6173" stop-color="#01013e"/><stop offset="0.7202" stop-color="#01013c"/><stop offset="0.8230" stop-color="#01013a"/><stop offset="0.9568" stop-color="#010138"/><stop offset="0.9774" stop-color="#00001d"/><stop offset="1.0000" stop-color="#000000"/></linearGradient>
<linearGradient id="s7" gradientUnits="userSpaceOnUse" x1="52" x2="1024"><stop offset="0.0000" stop-color="#ff5030"/><stop offset="0.0031" stop-color="#ff384e"/><stop offset="0.0051" stop-color="#f92c6c"/><stop offset="0.0082" stop-color="#e820a8"/><stop offset="0.0113" stop-color="#be1ad2"/><stop offset="0.0144" stop-color="#a717e2"/><stop offset="0.0185" stop-color="#9715e7"/><stop offset="0.0226" stop-color="#8613ec"/><stop offset="0.0278" stop-color="#7711ef"/><stop offset="0.0340" stop-color="#7110ed"/><stop offset="0.0412" stop-color="#6a10ec"/><stop offset="0.0514" stop-color="#5d10e2"/><stop offset="0.0617" stop-color="#5010d8"/><stop offset="0.0720" stop-color="#4210cc"/><stop offset="0.0823" stop-color="#3410c0"/><stop offset="0.0947" stop-color="#2c10b9"/><stop offset="0.1029" stop-color="#2610b5"/><stop offset="0.1132" stop-color="#2010b0"/><stop offset="0.1286" stop-color="#1b0ea8"/><stop offset="0.1440" stop-color="#160da1"/><stop offset="0.1646" stop-color="#100c98"/><stop offset="0.1852" stop-color="#0c0a8e"/><stop offset="0.2058" stop-color="#090884"/><stop offset="0.2263" stop-color="#06067a"/><stop offset="0.2521" stop-color="#050571"/><stop offset="0.2778" stop-color="#040469"/><stop offset="0.3086" stop-color="#040460"/><stop offset="0.3395" stop-color="#03035b"/><stop offset="0.3755" stop-color="#030356"/><stop offset="0.4115" stop-color="#020251"/><stop offset="0.4630" stop-color="#02024a"/><stop offset="0.5144" stop-color="#010146"/><stop offset="0.6173" stop-color="#01013e"/><stop offset="0.7202" stop-color="#01013c"/><stop offset="0.8230" stop-color="#01013a"/><stop offset="0.9568" stop-color="#010138"/><stop offset="0.9774" stop-color="#00001d"/><stop offset="1.0000" stop-color="#000000"/></linearGradient>
<linearGradient id="s8" gradientUnits="userSpaceOnUse" x1="52" x2="1024"><stop offset="0.0000" stop-color="#ff5030"/><stop offset="0.0031" stop-color="#ff384e"/><stop offset="0.0051" stop-color="#f92c6c"/><stop offset="0.0082" stop-color="#e820a8"/><stop offset="0.0113" stop-color="#be1ad2"/><stop offset="0.0144" stop-color="#a717e2"/><stop offset="0.0185" stop-color="#9715e7"/><stop offset="0.0226" stop-color="#8613ec"/><stop offset="0.0278" stop-color="#7711ef"/><stop offset="0.0340" stop-color="#7110ed"/><stop offset="0.0412" stop-color="#6a10ec"/><stop offset="0.0514" stop-color="#5d10e2"/><stop offset="0.0617" stop-color="#5010d8"/><stop offset="0.0720" stop-color="#4210cc"/><stop offset="0.0823" stop-color="#3410c0"/><stop offset="0.0947" stop-color="#2c10b9"/><stop offset="0.1029" stop-color="#2610b5"/><stop offset="0.1132" stop-color="#2010b0"/><stop offset="0.1286" stop-color="#1b0ea8"/><stop offset="0.1440" stop-color="#160da1"/><stop offset="0.1646" stop-color="#100c98"/><stop offset="0.1852" stop-color="#0c0a8e"/><stop offset="0.2058" stop-color="#090884"/><stop offset="0.2263" stop-color="#06067a"/><stop offset="0.2521" stop-color="#050571"/><stop offset="0.2778" stop-color="#040469"/><stop offset="0.3086" stop-color="#040460"/><stop offset="0.3395" stop-color="#03035b"/><stop offset="0.3755" stop-color="#030356"/><stop offset="0.4115" stop-color="#020251"/><stop offset="0.4630" stop-color="#02024a"/><stop offset="0.5144" stop-color="#010146"/><stop offset="0.6173" stop-color="#01013e"/><stop offset="0.7202" stop-color="#01013c"/><stop offset="0.8230" stop-color="#01013a"/><stop offset="0.9568" stop-color="#010138"/><stop offset="0.9774" stop-color="#00001d"/><stop offset="1.0000" stop-color="#000000"/></linearGradient>
<linearGradient id="s9" gradientUnits="userSpaceOnUse" x1="52" x2="1024"><stop offset="0.0000" stop-color="#ff602c"/><stop offset="0.0031" stop-color="#ff4647"/><stop offset="0.0051" stop-color="#fc365e"/><stop offset="0.0082" stop-color="#f12989"/><stop offset="0.0113" stop-color="#d921ab"/><stop offset="0.0144" stop-color="#cb1bc1"/><stop offset="0.0185" stop-color="#bf18c9"/><stop offset="0.0226" stop-color="#b315d2"/><stop offset="0.0278" stop-color="#a612db"/><stop offset="0.0340" stop-color="#9e10e0"/><stop offset="0.0412" stop-color="#9511e2"/><stop offset="0.0514" stop-color="#8612e1"/><stop offset="0.0617" stop-color="#7814e0"/><stop offset="0.0720" stop-color="#6c14da"/><stop offset="0.0823" stop-color="#6014d5"/><stop offset="0.0947" stop-color="#5614d2"/><stop offset="0.1029" stop-color="#5014d0"/><stop offset="0.1132" stop-color="#4813cc"/><stop offset="0.1286" stop-color="#3f12c5"/><stop offset="0.1440" stop-color="#3710be"/><stop offset="0.1646" stop-color="#290fb3"/><stop offset="0.1852" stop-color="#1c0da7"/><stop offset="0.2058" stop-color="#120b9b"/><stop offset="0.2263" stop-color="#09098f"/><stop offset="0.2521" stop-color="#080885"/><stop offset="0.2778" stop-color="#07077b"/><stop offset="0.3086" stop-color="#060670"/><stop offset="0.3395" stop-color="#050569"/><stop offset="0.3755" stop-color="#040462"/><stop offset="0.4115" stop-color="#04045b"/><stop offset="0.4630" stop-color="#030351"/><stop offset="0.5144" stop-color="#02024b"/><stop offset="0.6173" stop-color="#010141"/><stop offset="0.7202" stop-color="#01013e"/><stop offset="0.8230" stop-color="#01013c"/><stop offset="0.9568" stop-color="#010139"/><stop offset="0.9774" stop-color="#00001e"/><stop offset="1.0000" stop-color="#000000"/></linearGradient>
<linearGradient id="s10" gradientUnits="userSpaceOnUse" x1="52" x2="1024"><stop offset="0.0000" stop-color="#ff7028"/><stop offset="0.0031" stop-color="#ff5440"/><stop offset="0.0051" stop-color="#ff4150"/><stop offset="0.0082" stop-color="#fb326a"/><stop offset="0.0113" stop-color="#f52985"/><stop offset="0.0144" stop-color="#f020a0"/><stop offset="0.0185" stop-color="#e81cac"/><stop offset="0.0226" stop-color="#e018b8"/><stop offset="0.0278" stop-color="#d613c7"/><stop offset="0.0340" stop-color="#cb10d2"/><stop offset="0.0412" stop-color="#c012d8"/><stop offset="0.0514" stop-color="#b015e0"/><stop offset="0.0617" stop-color="#a018e8"/><stop offset="0.0720" stop-color="#9618e9"/><stop offset="0.0823" stop-color="#8d18ea"/><stop offset="0.0947" stop-color="#8118eb"/><stop offset="0.1029" stop-color="#7a18ec"/><stop offset="0.1132" stop-color="#7117e8"/><stop offset="0.1286" stop-color="#6415e2"/><stop offset="0.1440" stop-color="#5814dc"/><stop offset="0.1646" stop-color="#4212ce"/><stop offset="0.1852" stop-color="#2c10c0"/><stop offset="0.2058" stop-color="#1c0eb2"/><stop offset="0.2263" stop-color="#0c0ca4"/><stop offset="0.2521" stop-color="#0a0a98"/><stop offset="0.2778" stop-color="#09098d"/><stop offset="0.3086" stop-color="#080880"/><stop offset="0.3395" stop-color="#070778"/><stop offset="0.3755" stop-color="#06066e"/><stop offset="0.4115" stop-color="#050565"/><stop offset="0.4630" stop-color="#040458"/><stop offset="0.5144" stop-color="#030351"/><stop offset="0.6173" stop-color="#020244"/><stop offset="0.7202" stop-color="#010141"/><stop offset="0.8230" stop-color="#01013e"/><stop offset="0.9568" stop-color="#01013b"/><stop offset="0.9774" stop-color="#00001e"/><stop offset="1.0000" stop-color="#000000"/></linearGradient>
<linearGradient id="s11" gradientUnits="userSpaceOnUse" x1="52" x2="1024"><stop offset="0.0000" stop-color="#ff7028"/><stop offset="0.0031" stop-color="#ff5440"/><stop offset="0.0051" stop-color="#ff4150"/><stop offset="0.0082" stop-color="#fb326a"/><stop offset="0.0113" stop-color="#f52985"/><stop offset="0.0144" stop-color="#f020a0"/><stop offset="0.0185" stop-color="#e81cac"/><stop offset="0.0226" stop-color="#e018b8"/><stop offset="0.0278" stop-color="#d613c7"/><stop offset="0.0340" stop-color="#cb10d2"/><stop offset="0.0412" stop-color="#c012d8"/><stop offset="0.0514" stop-color="#b015e0"/><stop offset="0.0617" stop-color="#a018e8"/><stop offset="0.0720" stop-color="#9618e9"/><stop offset="0.0823" stop-color="#8d18ea"/><stop offset="0.0947" stop-color="#8118eb"/><stop offset="0.1029" stop-color="#7a18ec"/><stop offset="0.1132" stop-color="#7117e8"/><stop offset="0.1286" stop-color="#6415e2"/><stop offset="0.1440" stop-color="#5814dc"/><stop offset="0.1646" stop-color="#4212ce"/><stop offset="0.1852" stop-color="#2c10c0"/><stop offset="0.2058" stop-color="#1c0eb2"/><stop offset="0.2263" stop-color="#0c0ca4"/><stop offset="0.2521" stop-color="#0a0a98"/><stop offset="0.2778" stop-color="#09098d"/><stop offset="0.3086" stop-color="#080880"/><stop offset="0.3395" stop-color="#070778"/><stop offset="0.3755" stop-color="#06066e"/><stop offset="0.4115" stop-color="#050565"/><stop offset="0.4630" stop-color="#040458"/><stop offset="0.5144" stop-color="#030351"/><stop offset="0.6173" stop-color="#020244"/><stop offset="0.7202" stop-color="#010141"/><stop offset="0.8230" stop-color="#01013e"/><stop offset="0.9568" stop-color="#01013b"/><stop offset="0.9774" stop-color="#00001e"/><stop offset="1.0000" stop-color="#000000"/></linearGradient>
<linearGradient id="s12" gradientUnits="userSpaceOnUse" x1="52" x2="1024"><stop offset="0.0000" stop-color="#ff7028"/><stop offset="0.0031" stop-color="#ff5440"/><stop offset="0.0051" stop-color="#ff4150"/><stop offset="0.0082" stop-color="#fb326a"/><stop offset="0.0113" stop-color="#f52985"/><stop offset="0.0144" stop-color="#f020a0"/><stop offset="0.0185" stop-color="#e81cac"/><stop offset="0.0226" stop-color="#e018b8"/><stop offset="0.0278" stop-color="#d613c7"/><stop offset="0.0340" stop-color="#cb10d2"/><stop offset="0.0412" stop-color="#c012d8"/><stop offset="0.0514" stop-color="#b015e0"/><stop offset="0.0617" stop-color="#a018e8"/><stop offset="0.0720" stop-color="#9618e9"/><stop offset="0.0823" stop-color="#8d18ea"/><stop offset="0.0947" stop-color="#8118eb"/><stop offset="0.1029" stop-color="#7a18ec"/><stop offset="0.1132" stop-color="#7117e8"/><stop offset="0.1286" stop-color="#6415e2"/><stop offset="0.1440" stop-color="#5814dc"/><stop offset="0.1646" stop-color="#4212ce"/><stop offset="0.1852" stop-color="#2c10c0"/><stop offset="0.2058" stop-color="#1c0eb2"/><stop offset="0.2263" stop-color="#0c0ca4"/><stop offset="0.2521" stop-color="#0a0a98"/><stop offset="0.2778" stop-color="#09098d"/><stop offset="0.3086" stop-color="#080880"/><stop offset="0.3395" stop-color="#070778"/><stop offset="0.3755" stop-color="#06066e"/><stop offset="0.4115" stop-color="#050565"/><stop offset="0.4630" stop-color="#040458"/><stop offset="0.5144" stop-color="#030351"/><stop offset="0.6173" stop-color="#020244"/><stop offset="0.7202" stop-color="#010141"/><stop offset="0.8230" stop-color="#01013e"/><stop offset="0.9568" stop-color="#01013b"/><stop offset="0.9774" stop-color="#00001e"/><stop offset="1.0000" stop-color="#000000"/></linearGradient>
<linearGradient id="s13" gradientUnits="userSpaceOnUse" x1="52" x2="1024"><stop offset="0.0000" stop-color="#ff7028"/><stop offset="0.0031" stop-color="#ff5440"/><stop offset="0.0051" stop-color="#ff4150"/><stop offset="0.0082" stop-color="#fb326a"/><stop offset="0.0113" stop-color="#f52985"/><stop offset="0.0144" stop-color="#f020a0"/><stop offset="0.0185" stop-color="#e81cac"/><stop offset="0.0226" stop-color="#e018b8"/><stop offset="0.0278" stop-color="#d613c7"/><stop offset="0.0340" stop-color="#cb10d2"/><stop offset="0.0412" stop-color="#c012d8"/><stop offset="0.0514" stop-color="#b015e0"/><stop offset="0.0617" stop-color="#a018e8"/><stop offset="0.0720" stop-color="#9618e9"/><stop offset="0.0823" stop-color="#8d18ea"/><stop offset="0.0947" stop-color="#8118eb"/><stop offset="0.1029" stop-color="#7a18ec"/><stop offset="0.1132" stop-color="#7117e8"/><stop offset="0.1286" stop-color="#6415e2"/><stop offset="0.1440" stop-color="#5814dc"/><stop offset="0.1646" stop-color="#4212ce"/><stop offset="0.1852" stop-color="#2c10c0"/><stop offset="0.2058" stop-color="#1c0eb2"/><stop offset="0.2263" stop-color="#0c0ca4"/><stop offset="0.2521" stop-color="#0a0a98"/><stop offset="0.2778" stop-color="#09098d"/><stop offset="0.3086" stop-color="#080880"/><stop offset="0.3395" stop-color="#070778"/><stop offset="0.3755" stop-color="#06066e"/><stop offset="0.4115" stop-color="#050565"/><stop offset="0.4630" stop-color="#040458"/><stop offset="0.5144" stop-color="#030351"/><stop offset="0.6173" stop-color="#020244"/><stop offset="0.7202" stop-color="#010141"/><stop offset="0.8230" stop-color="#01013e"/><stop offset="0.9568" stop-color="#01013b"/><stop offset="0.9774" stop-color="#00001e"/><stop offset="1.0000" stop-color="#000000"/></linearGradient>
<linearGradient id="s14" gradientUnits="userSpaceOnUse" x1="52" x2="1024"><stop offset="0.0000" stop-color="#ff8c23"/><stop offset="0.0031" stop-color="#ff7330"/><stop offset="0.0051" stop-color="#ff6239"/><stop offset="0.0082" stop-color="#fd4d47"/><stop offset="0.0113" stop-color="#fb4456"/><stop offset="0.0144" stop-color="#f93a66"/><stop offset="0.0185" stop-color="#f53071"/><stop offset="0.0226" stop-color="#f2297c"/><stop offset="0.0278" stop-color="#ee2488"/><stop offset="0.0340" stop-color="#ea1e93"/><stop offset="0.0412" stop-color="#e51a9e"/><stop offset="0.0514" stop-color="#dc18ab"/><stop offset="0.0617" stop-color="#d316b8"/><stop offset="0.0720" stop-color="#cc13c2"/><stop offset="0.0823" stop-color="#c513c7"/><stop offset="0.0947" stop-color="#bc13cd"/><stop offset="0.1029" stop-color="#b713d1"/><stop offset="0.1132" stop-color="#af12d3"/><stop offset="0.1286" stop-color="#a212d5"/><stop offset="0.1440" stop-color="#9611d7"/><stop offset="0.1646" stop-color="#8413d7"/><stop offset="0.1852" stop-color="#7114d8"/><stop offset="0.2058" stop-color="#5c14d4"/><stop offset="0.2263" stop-color="#4813d1"/><stop offset="0.2521" stop-color="#2f10c5"/><stop offset="0.2778" stop-color="#1b0eb7"/><stop offset="0.3086" stop-color="#0f0ca6"/><stop offset="0.3395" stop-color="#0a0a99"/><stop offset="0.3755" stop-color="#09098c"/><stop offset="0.4115" stop-color="#08087e"/><stop offset="0.4630" stop-color="#060668"/><stop offset="0.5144" stop-color="#04045a"/><stop offset="0.6173" stop-color="#03034e"/><stop offset="0.7202" stop-color="#020247"/><stop offset="0.8230" stop-color="#020244"/><stop offset="0.9568" stop-color="#01013f"/><stop offset="0.9774" stop-color="#000020"/><stop offset="1.0000" stop-color="#000000"/></linearGradient>
<linearGradient id="s15" gradientUnits="userSpaceOnUse" x1="52" x2="1024"><stop offset="0.0000" stop-color="#ffa020"/><stop offset="0.0031" stop-color="#ff8826"/><stop offset="0.0051" stop-color="#ff782a"/><stop offset="0.0082" stop-color="#ff6030"/><stop offset="0.0113" stop-color="#ff5638"/><stop offset="0.0144" stop-color="#ff4c40"/><stop offset="0.0185" stop-color="#ff3e4a"/><stop offset="0.0226" stop-color="#ff3554"/><stop offset="0.0278" stop-color="#ff2f5e"/><stop offset="0.0340" stop-color="#ff286a"/><stop offset="0.0412" stop-color="#ff2078"/><stop offset="0.0514" stop-color="#fa1a88"/><stop offset="0.0617" stop-color="#f51598"/><stop offset="0.0720" stop-color="#f010a8"/><stop offset="0.0823" stop-color="#ea10b0"/><stop offset="0.0947" stop-color="#e410b9"/><stop offset="0.1029" stop-color="#e010c0"/><stop offset="0.1132" stop-color="#d810c5"/><stop offset="0.1286" stop-color="#cc10cc"/><stop offset="0.1440" stop-color="#c010d4"/><stop offset="0.1646" stop-color="#b014de"/><stop offset="0.1852" stop-color="#a018e8"/><stop offset="0.2058" stop-color="#8818ec"/><stop offset="0.2263" stop-color="#7018f0"/><stop offset="0.2521" stop-color="#4814e2"/><stop offset="0.2778" stop-color="#2611d2"/><stop offset="0.3086" stop-color="#140fc0"/><stop offset="0.3395" stop-color="#0d0daf"/><stop offset="0.3755" stop-color="#0b0b9f"/><stop offset="0.4115" stop-color="#0a0a90"/><stop offset="0.4630" stop-color="#080874"/><stop offset="0.5144" stop-color="#060660"/><stop offset="0.6173" stop-color="#040456"/><stop offset="0.7202" stop-color="#03034c"/><stop offset="0.8230" stop-color="#020247"/><stop offset="0.9568" stop-color="#020241"/><stop offset="0.9774" stop-color="#010122"/><stop offset="1.0000" stop-color="#000000"/></linearGradient>
<linearGradient id="s16" gradientUnits="userSpaceOnUse" x1="52" x2="1024"><stop offset="0.0000" stop-color="#ffa020"/><stop offset="0.0031" stop-color="#ff8826"/><stop offset="0.0051" stop-color="#ff782a"/><stop offset="0.0082" stop-color="#ff6030"/><stop offset="0.0113" stop-color="#ff5638"/><stop offset="0.0144" stop-color="#ff4c40"/><stop offset="0.0185" stop-color="#ff3e4a"/><stop offset="0.0226" stop-color="#ff3554"/><stop offset="0.0278" stop-color="#ff2f5e"/><stop offset="0.0340" stop-color="#ff286a"/><stop offset="0.0412" stop-color="#ff2078"/><stop offset="0.0514" stop-color="#fa1a88"/><stop offset="0.0617" stop-color="#f51598"/><stop offset="0.0720" stop-color="#f010a8"/><stop offset="0.0823" stop-color="#ea10b0"/><stop offset="0.0947" stop-color="#e410b9"/><stop offset="0.1029" stop-color="#e010c0"/><stop offset="0.1132" stop-color="#d810c5"/><stop offset="0.1286" stop-color="#cc10cc"/><stop offset="0.1440" stop-color="#c010d4"/><stop offset="0.1646" stop-color="#b014de"/><stop offset="0.1852" stop-color="#a018e8"/><stop offset="0.2058" stop-color="#8818ec"/><stop offset="0.2263" stop-color="#7018f0"/><stop offset="0.2521" stop-color="#4814e2"/><stop offset="0.2778" stop-color="#2611d2"/><stop offset="0.3086" stop-color="#140fc0"/><stop offset="0.3395" stop-color="#0d0daf"/><stop offset="0.3755" stop-color="#0b0b9f"/><stop offset="0.4115" stop-color="#0a0a90"/><stop offset="0.4630" stop-color="#080874"/><stop offset="0.5144" stop-color="#060660"/><stop offset="0.6173" stop-color="#040456"/><stop offset="0.7202" stop-color="#03034c"/><stop offset="0.8230" stop-color="#020247"/><stop offset="0.9568" stop-color="#020241"/><stop offset="0.9774" stop-color="#010122"/><stop offset="1.0000" stop-color="#000000"/></linearGradient>
<linearGradient id="s17" gradientUnits="userSpaceOnUse" x1="52" x2="1024"><stop offset="0.0000" stop-color="#ff8824"/><stop offset="0.0031" stop-color="#ff6e33"/><stop offset="0.0051" stop-color="#ff5c3d"/><stop offset="0.0082" stop-color="#fd494d"/><stop offset="0.0113" stop-color="#fa3f5e"/><stop offset="0.0144" stop-color="#f73670"/><stop offset="0.0185" stop-color="#f32d7b"/><stop offset="0.0226" stop-color="#ef2686"/><stop offset="0.0278" stop-color="#ea2192"/><stop offset="0.0340" stop-color="#e51c9e"/><stop offset="0.0412" stop-color="#df19a8"/><stop offset="0.0514" stop-color="#d518b4"/><stop offset="0.0617" stop-color="#ca16c0"/><stop offset="0.0720" stop-color="#c314c8"/><stop offset="0.0823" stop-color="#bb14cd"/><stop offset="0.0947" stop-color="#b214d2"/><stop offset="0.1029" stop-color="#ad14d6"/><stop offset="0.1132" stop-color="#a413d6"/><stop offset="0.1286" stop-color="#9812d7"/><stop offset="0.1440" stop-color="#8c12d8"/><stop offset="0.1646" stop-color="#7913d6"/><stop offset="0.1852" stop-color="#6614d4"/><stop offset="0.2058" stop-color="#5213cf"/><stop offset="0.2263" stop-color="#3e12ca"/><stop offset="0.2521" stop-color="#290fbd"/><stop offset="0.2778" stop-color="#180db0"/><stop offset="0.3086" stop-color="#0e0ba0"/><stop offset="0.3395" stop-color="#0a0a93"/><stop offset="0.3755" stop-color="#090987"/><stop offset="0.4115" stop-color="#07077a"/><stop offset="0.4630" stop-color="#060666"/><stop offset="0.5144" stop-color="#040458"/><stop offset="0.6173" stop-color="#03034d"/><stop offset="0.7202" stop-color="#020246"/><stop offset="0.8230" stop-color="#020243"/><stop offset="0.9568" stop-color="#01013e"/><stop offset="0.9774" stop-color="#000020"/><stop offset="1.0000" stop-color="#000000"/></linearGradient>
<linearGradient id="s18" gradientUnits="userSpaceOnUse" x1="52" x2="1024"><stop offset="0.0000" stop-color="#ff632b"/><stop offset="0.0031" stop-color="#ff4a45"/><stop offset="0.0051" stop-color="#ff3a56"/><stop offset="0.0082" stop-color="#f92d75"/><stop offset="0.0113" stop-color="#f02592"/><stop offset="0.0144" stop-color="#e51eaa"/><stop offset="0.0185" stop-color="#d61bbb"/><stop offset="0.0226" stop-color="#c917c8"/><stop offset="0.0278" stop-color="#ba13d1"/><stop offset="0.0340" stop-color="#aa11d7"/><stop offset="0.0412" stop-color="#9911da"/><stop offset="0.0514" stop-color="#8613d9"/><stop offset="0.0617" stop-color="#7314d8"/><stop offset="0.0720" stop-color="#6a14d4"/><stop offset="0.0823" stop-color="#6113d0"/><stop offset="0.0947" stop-color="#5612cb"/><stop offset="0.1029" stop-color="#4e12c8"/><stop offset="0.1132" stop-color="#4911c5"/><stop offset="0.1286" stop-color="#4110bf"/><stop offset="0.1440" stop-color="#380fb9"/><stop offset="0.1646" stop-color="#2a0eae"/><stop offset="0.1852" stop-color="#1d0ca2"/><stop offset="0.2058" stop-color="#130a97"/><stop offset="0.2263" stop-color="#09098b"/><stop offset="0.2521" stop-color="#080881"/><stop offset="0.2778" stop-color="#070777"/><stop offset="0.3086" stop-color="#06066c"/><stop offset="0.3395" stop-color="#050566"/><stop offset="0.3755" stop-color="#040460"/><stop offset="0.4115" stop-color="#040459"/><stop offset="0.4630" stop-color="#030350"/><stop offset="0.5144" stop-color="#02024b"/><stop offset="0.6173" stop-color="#010140"/><stop offset="0.7202" stop-color="#01013e"/><stop offset="0.8230" stop-color="#01013c"/><stop offset="0.9568" stop-color="#01013a"/><stop offset="0.9774" stop-color="#00001e"/><stop offset="1.0000" stop-color="#000000"/></linearGradient>
<linearGradient id="s19" gradientUnits="userSpaceOnUse" x1="52" x2="1024"><stop offset="0.0000" stop-color="#ff562e"/><stop offset="0.0031" stop-color="#ff414a"/><stop offset="0.0051" stop-color="#ff335c"/><stop offset="0.0082" stop-color="#f72880"/><stop offset="0.0113" stop-color="#ec219f"/><stop offset="0.0144" stop-color="#db1db4"/><stop offset="0.0185" stop-color="#c51acb"/><stop offset="0.0226" stop-color="#b217d8"/><stop offset="0.0278" stop-color="#9f14db"/><stop offset="0.0340" stop-color="#8911dd"/><stop offset="0.0412" stop-color="#7210dc"/><stop offset="0.0514" stop-color="#5c11d2"/><stop offset="0.0617" stop-color="#4611c8"/><stop offset="0.0720" stop-color="#3d10bf"/><stop offset="0.0823" stop-color="#340fb6"/><stop offset="0.0947" stop-color="#2a0dac"/><stop offset="0.1029" stop-color="#230ca5"/><stop offset="0.1132" stop-color="#210ca2"/><stop offset="0.1286" stop-color="#1d0b9c"/><stop offset="0.1440" stop-color="#190a97"/><stop offset="0.1646" stop-color="#130a8f"/><stop offset="0.1852" stop-color="#0e0885"/><stop offset="0.2058" stop-color="#0a077c"/><stop offset="0.2263" stop-color="#060672"/><stop offset="0.2521" stop-color="#05056a"/><stop offset="0.2778" stop-color="#040461"/><stop offset="0.3086" stop-color="#040458"/><stop offset="0.3395" stop-color="#030354"/><stop offset="0.3755" stop-color="#030351"/><stop offset="0.4115" stop-color="#02024d"/><stop offset="0.4630" stop-color="#020248"/><stop offset="0.5144" stop-color="#020245"/><stop offset="0.6173" stop-color="#01013d"/><stop offset="0.7202" stop-color="#01013c"/><stop offset="0.8230" stop-color="#01013a"/><stop offset="0.9568" stop-color="#010138"/><stop offset="0.9774" stop-color="#00001d"/><stop offset="1.0000" stop-color="#000000"/></linearGradient>
<linearGradient id="s20" gradientUnits="userSpaceOnUse" x1="52" x2="1024"><stop offset="0.0000" stop-color="#ff5030"/><stop offset="0.0031" stop-color="#ff3c4c"/><stop offset="0.0051" stop-color="#ff3060"/><stop offset="0.0082" stop-color="#f62686"/><stop offset="0.0113" stop-color="#e91fa6"/><stop offset="0.0144" stop-color="#d61cb9"/><stop offset="0.0185" stop-color="#bc19d3"/><stop offset="0.0226" stop-color="#a717e0"/><stop offset="0.0278" stop-color="#9214e0"/><stop offset="0.0340" stop-color="#7912e0"/><stop offset="0.0412" stop-color="#5f10dd"/><stop offset="0.0514" stop-color="#4710ce"/><stop offset="0.0617" stop-color="#3010c0"/><stop offset="0.0720" stop-color="#270eb5"/><stop offset="0.0823" stop-color="#1f0daa"/><stop offset="0.0947" stop-color="#140b9c"/><stop offset="0.1029" stop-color="#0e0a94"/><stop offset="0.1132" stop-color="#0d0990"/><stop offset="0.1286" stop-color="#0b098b"/><stop offset="0.1440" stop-color="#0a0886"/><stop offset="0.1646" stop-color="#080880"/><stop offset="0.1852" stop-color="#070777"/><stop offset="0.2058" stop-color="#06066e"/><stop offset="0.2263" stop-color="#050566"/><stop offset="0.2521" stop-color="#04045e"/><stop offset="0.2778" stop-color="#030357"/><stop offset="0.3086" stop-color="#03034e"/><stop offset="0.3395" stop-color="#02024c"/><stop offset="0.3755" stop-color="#02024a"/><stop offset="0.4115" stop-color="#020248"/><stop offset="0.4630" stop-color="#020245"/><stop offset="0.5144" stop-color="#010142"/><stop offset="0.6173" stop-color="#01013c"/><stop offset="0.7202" stop-color="#01013a"/><stop offset="0.8230" stop-color="#010139"/><stop offset="0.9568" stop-color="#010138"/><stop offset="0.9774" stop-color="#00001d"/><stop offset="1.0000" stop-color="#000000"/></linearGradient>
<linearGradient id="s21" gradientUnits="userSpaceOnUse" x1="52" x2="1024"><stop offset="0.0000" stop-color="#ff5030"/><stop offset="0.0031" stop-color="#ff3c4c"/><stop offset="0.0051" stop-color="#ff3060"/><stop offset="0.0082" stop-color="#f62686"/><stop offset="0.0113" stop-color="#e91fa6"/><stop offset="0.0144" stop-color="#d61cb9"/><stop offset="0.0185" stop-color="#bc19d3"/><stop offset="0.0226" stop-color="#a717e0"/><stop offset="0.0278" stop-color="#9214e0"/><stop offset="0.0340" stop-color="#7912e0"/><stop offset="0.0412" stop-color="#5f10dd"/><stop offset="0.0514" stop-color="#4710ce"/><stop offset="0.0617" stop-color="#3010c0"/><stop offset="0.0720" stop-color="#270eb5"/><stop offset="0.0823" stop-color="#1f0daa"/><stop offset="0.0947" stop-color="#140b9c"/><stop offset="0.1029" stop-color="#0e0a94"/><stop offset="0.1132" stop-color="#0d0990"/><stop offset="0.1286" stop-color="#0b098b"/><stop offset="0.1440" stop-color="#0a0886"/><stop offset="0.1646" stop-color="#080880"/><stop offset="0.1852" stop-color="#070777"/><stop offset="0.2058" stop-color="#06066e"/><stop offset="0.2263" stop-color="#050566"/><stop offset="0.2521" stop-color="#04045e"/><stop offset="0.2778" stop-color="#030357"/><stop offset="0.3086" stop-color="#03034e"/><stop offset="0.3395" stop-color="#02024c"/><stop offset="0.3755" stop-color="#02024a"/><stop offset="0.4115" stop-color="#020248"/><stop offset="0.4630" stop-color="#020245"/><stop offset="0.5144" stop-color="#010142"/><stop offset="0.6173" stop-color="#01013c"/><stop offset="0.7202" stop-color="#01013a"/><stop offset="0.8230" stop-color="#010139"/><stop offset="0.9568" stop-color="#010138"/><stop offset="0.9774" stop-color="#00001d"/><stop offset="1.0000" stop-color="#000000"/></linearGradient>
<linearGradient id="s22" gradientUnits="userSpaceOnUse" x1="52" x2="1024"><stop offset="0.0000" stop-color="#ff5030"/><stop offset="0.0031" stop-color="#ff3c4c"/><stop offset="0.0051" stop-color="#ff3060"/><stop offset="0.0082" stop-color="#f62686"/><stop offset="0.0113" stop-color="#e91fa6"/><stop offset="0.0144" stop-color="#d61cb9"/><stop offset="0.0185" stop-color="#bc19d3"/><stop offset="0.0226" stop-color="#a717e0"/><stop offset="0.0278" stop-color="#9214e0"/><stop offset="0.0340" stop-color="#7912e0"/><stop offset="0.0412" stop-color="#5f10dd"/><stop offset="0.0514" stop-color="#4710ce"/><stop offset="0.0617" stop-color="#3010c0"/><stop offset="0.0720" stop-color="#270eb5"/><stop offset="0.0823" stop-color="#1f0daa"/><stop offset="0.0947" stop-color="#140b9c"/><stop offset="0.1029" stop-color="#0e0a94"/><stop offset="0.1132" stop-color="#0d0990"/><stop offset="0.1286" stop-color="#0b098b"/><stop offset="0.1440" stop-color="#0a0886"/><stop offset="0.1646" stop-color="#080880"/><stop offset="0.1852" stop-color="#070777"/><stop offset="0.2058" stop-color="#06066e"/><stop offset="0.2263" stop-color="#050566"/><stop offset="0.2521" stop-color="#04045e"/><stop offset="0.2778" stop-color="#030357"/><stop offset="0.3086" stop-color="#03034e"/><stop offset="0.3395" stop-color="#02024c"/><stop offset="0.3755" stop-color="#02024a"/><stop offset="0.4115" stop-color="#020248"/><stop offset="0.4630" stop-color="#020245"/><stop offset="0.5144" stop-color="#010142"/><stop offset="0.6173" stop-color="#01013c"/><stop offset="0.7202" stop-color="#01013a"/><stop offset="0.8230" stop-color="#010139"/><stop offset="0.9568" stop-color="#010138"/><stop offset="0.9774" stop-color="#00001d"/><stop offset="1.0000" stop-color="#000000"/></linearGradient>
<linearGradient id="s23" gradientUnits="userSpaceOnUse" x1="52" x2="1024"><stop offset="0.0000" stop-color="#ff5038"/><stop offset="0.0031" stop-color="#ff4050"/><stop offset="0.0051" stop-color="#ff3661"/><stop offset="0.0082" stop-color="#fa2b7f"/><stop offset="0.0113" stop-color="#f42792"/><stop offset="0.0144" stop-color="#ea269e"/><stop offset="0.0185" stop-color="#dd24af"/><stop offset="0.0226" stop-color="#d122ba"/><stop offset="0.0278" stop-color="#c31fbf"/><stop offset="0.0340" stop-color="#b11bc5"/><stop offset="0.0412" stop-color="#9f18ca"/><stop offset="0.0514" stop-color="#8918c9"/><stop offset="0.0617" stop-color="#7218c9"/><stop offset="0.0720" stop-color="#6317ca"/><stop offset="0.0823" stop-color="#5816c5"/><stop offset="0.0947" stop-color="#4b15bf"/><stop offset="0.1029" stop-color="#4315bc"/><stop offset="0.1132" stop-color="#3d13b7"/><stop offset="0.1286" stop-color="#3412b1"/><stop offset="0.1440" stop-color="#2b10ab"/><stop offset="0.1646" stop-color="#210ea2"/><stop offset="0.1852" stop-color="#170c97"/><stop offset="0.2058" stop-color="#130b91"/><stop offset="0.2263" stop-color="#0e0a8b"/><stop offset="0.2521" stop-color="#0c097f"/><stop offset="0.2778" stop-color="#090874"/><stop offset="0.3086" stop-color="#060667"/><stop offset="0.3395" stop-color="#050561"/><stop offset="0.3755" stop-color="#04045b"/><stop offset="0.4115" stop-color="#040456"/><stop offset="0.4630" stop-color="#03034d"/><stop offset="0.5144" stop-color="#020248"/><stop offset="0.6173" stop-color="#01013f"/><stop offset="0.7202" stop-color="#01013d"/><stop offset="0.8230" stop-color="#01013b"/><stop offset="0.9568" stop-color="#010139"/><stop offset="0.9774" stop-color="#00001e"/><stop offset="1.0000" stop-color="#000000"/></linearGradient>
<linearGradient id="s24" gradientUnits="userSpaceOnUse" x1="52" x2="1024"><stop offset="0.0000" stop-color="#ff5040"/><stop offset="0.0031" stop-color="#ff4455"/><stop offset="0.0051" stop-color="#ff3c63"/><stop offset="0.0082" stop-color="#ff3078"/><stop offset="0.0113" stop-color="#ff307e"/><stop offset="0.0144" stop-color="#ff3084"/><stop offset="0.0185" stop-color="#ff308c"/><stop offset="0.0226" stop-color="#fb2e94"/><stop offset="0.0278" stop-color="#f42a9e"/><stop offset="0.0340" stop-color="#ea25aa"/><stop offset="0.0412" stop-color="#e020b8"/><stop offset="0.0514" stop-color="#ca20c5"/><stop offset="0.0617" stop-color="#b520d2"/><stop offset="0.0720" stop-color="#a020e0"/><stop offset="0.0823" stop-color="#9220e1"/><stop offset="0.0947" stop-color="#8220e2"/><stop offset="0.1029" stop-color="#7820e4"/><stop offset="0.1132" stop-color="#6d1edf"/><stop offset="0.1286" stop-color="#5c1bd7"/><stop offset="0.1440" stop-color="#4c18d0"/><stop offset="0.1646" stop-color="#3a15c4"/><stop offset="0.1852" stop-color="#2812b8"/><stop offset="0.2058" stop-color="#2011b4"/><stop offset="0.2263" stop-color="#1810b0"/><stop offset="0.2521" stop-color="#130ea1"/><stop offset="0.2778" stop-color="#0f0c92"/><stop offset="0.3086" stop-color="#0a0a80"/><stop offset="0.3395" stop-color="#080877"/><stop offset="0.3755" stop-color="#07076d"/><stop offset="0.4115" stop-color="#060664"/><stop offset="0.4630" stop-color="#040456"/><stop offset="0.5144" stop-color="#03034f"/><stop offset="0.6173" stop-color="#020242"/><stop offset="0.7202" stop-color="#01013f"/><stop offset="0.8230" stop-color="#01013d"/><stop offset="0.9568" stop-color="#01013a"/><stop offset="0.9774" stop-color="#00001e"/><stop offset="1.0000" stop-color="#000000"/></linearGradient>
<linearGradient id="s25" gradientUnits="userSpaceOnUse" x1="52" x2="1024"><stop offset="0.0000" stop-color="#ff5040"/><stop offset="0.0031" stop-color="#ff4455"/><stop offset="0.0051" stop-color="#ff3c63"/><stop offset="0.0082" stop-color="#ff3078"/><stop offset="0.0113" stop-color="#ff307e"/><stop offset="0.0144" stop-color="#ff3084"/><stop offset="0.0185" stop-color="#ff308c"/><stop offset="0.0226" stop-color="#fb2e94"/><stop offset="0.0278" stop-color="#f42a9e"/><stop offset="0.0340" stop-color="#ea25aa"/><stop offset="0.0412" stop-color="#e020b8"/><stop offset="0.0514" stop-color="#ca20c5"/><stop offset="0.0617" stop-color="#b520d2"/><stop offset="0.0720" stop-color="#a020e0"/><stop offset="0.0823" stop-color="#9220e1"/><stop offset="0.0947" stop-color="#8220e2"/><stop offset="0.1029" stop-color="#7820e4"/><stop offset="0.1132" stop-color="#6d1edf"/><stop offset="0.1286" stop-color="#5c1bd7"/><stop offset="0.1440" stop-color="#4c18d0"/><stop offset="0.1646" stop-color="#3a15c4"/><stop offset="0.1852" stop-color="#2812b8"/><stop offset="0.2058" stop-color="#2011b4"/><stop offset="0.2263" stop-color="#1810b0"/><stop offset="0.2521" stop-color="#130ea1"/><stop offset="0.2778" stop-color="#0f0c92"/><stop offset="0.3086" stop-color="#0a0a80"/><stop offset="0.3395" stop-color="#080877"/><stop offset="0.3755" stop-color="#07076d"/><stop offset="0.4115" stop-color="#060664"/><stop offset="0.4630" stop-color="#040456"/><stop offset="0.5144" stop-color="#03034f"/><stop offset="0.6173" stop-color="#020242"/><stop offset="0.7202" stop-color="#01013f"/><stop offset="0.8230" stop-color="#01013d"/><stop offset="0.9568" stop-color="#01013a"/><stop offset="0.9774" stop-color="#00001e"/><stop offset="1.0000" stop-color="#000000"/></linearGradient>
<linearGradient id="s26" gradientUnits="userSpaceOnUse" x1="52" x2="1024"><stop offset="0.0000" stop-color="#ff5040"/><stop offset="0.0031" stop-color="#ff4455"/><stop offset="0.0051" stop-color="#ff3c63"/><stop offset="0.0082" stop-color="#ff3078"/><stop offset="0.0113" stop-color="#ff307e"/><stop offset="0.0144" stop-color="#ff3084"/><stop offset="0.0185" stop-color="#ff308c"/><stop offset="0.0226" stop-color="#fb2e94"/><stop offset="0.0278" stop-color="#f42a9e"/><stop offset="0.0340" stop-color="#ea25aa"/><stop offset="0.0412" stop-color="#e020b8"/><stop offset="0.0514" stop-color="#ca20c5"/><stop offset="0.0617" stop-color="#b520d2"/><stop offset="0.0720" stop-color="#a020e0"/><stop offset="0.0823" stop-color="#9220e1"/><stop offset="0.0947" stop-color="#8220e2"/><stop offset="0.1029" stop-color="#7820e4"/><stop offset="0.1132" stop-color="#6d1edf"/><stop offset="0.1286" stop-color="#5c1bd7"/><stop offset="0.1440" stop-color="#4c18d0"/><stop offset="0.1646" stop-color="#3a15c4"/><stop offset="0.1852" stop-color="#2812b8"/><stop offset="0.2058" stop-color="#2011b4"/><stop offset="0.2263" stop-color="#1810b0"/><stop offset="0.2521" stop-color="#130ea1"/><stop offset="0.2778" stop-color="#0f0c92"/><stop offset="0.3086" stop-color="#0a0a80"/><stop offset="0.3395" stop-color="#080877"/><stop offset="0.3755" stop-color="#07076d"/><stop offset="0.4115" stop-color="#060664"/><stop offset="0.4630" stop-color="#040456"/><stop offset="0.5144" stop-color="#03034f"/><stop offset="0.6173" stop-color="#020242"/><stop offset="0.7202" stop-color="#01013f"/><stop offset="0.8230" stop-color="#01013d"/><stop offset="0.9568" stop-color="#01013a"/><stop offset="0.9774" stop-color="#00001e"/><stop offset="1.0000" stop-color="#000000"/></linearGradient>
<linearGradient id="s27" gradientUnits="userSpaceOnUse" x1="52" x2="1024"><stop offset="0.0000" stop-color="#e54839"/><stop offset="0.0031" stop-color="#e53d4c"/><stop offset="0.0051" stop-color="#e53659"/><stop offset="0.0082" stop-color="#e52b6c"/><stop offset="0.0113" stop-color="#e52b71"/><stop offset="0.0144" stop-color="#e52b76"/><stop offset="0.0185" stop-color="#e52b7e"/><stop offset="0.0226" stop-color="#e22985"/><stop offset="0.0278" stop-color="#db268e"/><stop offset="0.0340" stop-color="#d32199"/><stop offset="0.0412" stop-color="#c91ca5"/><stop offset="0.0514" stop-color="#b61cb1"/><stop offset="0.0617" stop-color="#a31cbd"/><stop offset="0.0720" stop-color="#901cc9"/><stop offset="0.0823" stop-color="#841cca"/><stop offset="0.0947" stop-color="#751ccc"/><stop offset="0.1029" stop-color="#6c1ccd"/><stop offset="0.1132" stop-color="#621bc8"/><stop offset="0.1286" stop-color="#5318c1"/><stop offset="0.1440" stop-color="#4415bb"/><stop offset="0.1646" stop-color="#3412b0"/><stop offset="0.1852" stop-color="#2410a5"/><stop offset="0.2058" stop-color="#1c0fa2"/><stop offset="0.2263" stop-color="#150e9e"/><stop offset="0.2521" stop-color="#110c90"/><stop offset="0.2778" stop-color="#0d0b83"/><stop offset="0.3086" stop-color="#090973"/><stop offset="0.3395" stop-color="#07076b"/><stop offset="0.3755" stop-color="#060662"/><stop offset="0.4115" stop-color="#05055a"/><stop offset="0.4630" stop-color="#03034d"/><stop offset="0.5144" stop-color="#030347"/><stop offset="0.6173" stop-color="#01013b"/><stop offset="0.7202" stop-color="#010139"/><stop offset="0.8230" stop-color="#010137"/><stop offset="0.9568" stop-color="#010135"/><stop offset="0.9774" stop-color="#00001b"/><stop offset="1.0000" stop-color="#000000"/></linearGradient>
</defs>
<g shape-rendering="crispEdges">
<rect x="52" y="707" width="972" height="1" fill="url(#s0)"/>
<rect x="52" y="708" width="972" height="1" fill="url(#s1)"/>
<rect x="52" y="709" width="972" height="1" fill="url(#s2)"/>
<rect x="52" y="710" width="972" height="1" fill="url(#s3)"/>
<rect x="52" y="711" width="972" height="1" fill="url(#s4)"/>
<rect x="52" y="712" width="972" height="1" fill="url(#s5)"/>
<rect x="52" y="713" width="972" height="1" fill="url(#s6)"/>
<rect x="52" y="714" width="972" height="1" fill="url(#s7)"/>
<rect x="52" y="715" width="972" height="1" fill="url(#s8)"/>
<rect x="52" y="716" width="972" height="1" fill="url(#s9)"/>
<rect x="52" y="717" width="972" height="1" fill="url(#s10)"/>
<rect x="52" y="718" width="972" height="1" fill="url(#s11)"/>
<rect x="52" y="719" width="972" height="1" fill="url(#s12)"/>
<rect x="52" y="720" width="972" height="1" fill="url(#s13)"/>
<rect x="52" y="721" width="972" height="1" fill="url(#s14)"/>
<rect x="52" y="722" width="972" height="1" fill="url(#s15)"/>
<rect x="52" y="723" width="972" height="1" fill="url(#s16)"/>
<rect x="52" y="724" width="972" height="1" fill="url(#s17)"/>
<rect x="52" y="725" width="972" height="1" fill="url(#s18)"/>
<rect x="52" y="726" width="972" height="1" fill="url(#s19)"/>
<rect x="52" y="727" width="972" height="1" fill="url(#s20)"/>
<rect x="52" y="728" width="972" height="1" fill="url(#s21)"/>
<rect x="52" y="729" width="972" height="1" fill="url(#s22)"/>
<rect x="52" y="730" width="972" height="1" fill="url(#s23)"/>
<rect x="52" y="731" width="972" height="1" fill="url(#s24)"/>
<rect x="52" y="732" width="972" height="1" fill="url(#s25)"/>
<rect x="52" y="733" width="972" height="1" fill="url(#s26)"/>
<rect x="52" y="734" width="972" height="1" fill="url(#s27)"/>
<rect x="262" y="707" width="6" height="28" fill="#1414c8" opacity="0.10"/>
<rect x="264" y="707" width="3" height="28" fill="#1414c8" opacity="0.2"/>
<rect x="337" y="707" width="6" height="28" fill="#1414c8" opacity="0.08"/>
<rect x="339" y="707" width="3" height="28" fill="#1414c8" opacity="0.16"/>
<rect x="351" y="707" width="6" height="28" fill="#1414c8" opacity="0.07"/>
<rect x="353" y="707" width="3" height="28" fill="#1414c8" opacity="0.14"/>
<rect x="359" y="707" width="6" height="28" fill="#1414c8" opacity="0.20"/>
<rect x="361" y="707" width="3" height="28" fill="#1414c8" opacity="0.4"/>
<rect x="626" y="707" width="6" height="28" fill="#1414c8" opacity="0.09"/>
<rect x="628" y="707" width="3" height="28" fill="#1414c8" opacity="0.18"/>
<rect x="653" y="707" width="6" height="28" fill="#1414c8" opacity="0.09"/>
<rect x="655" y="707" width="3" height="28" fill="#1414c8" opacity="0.18"/>
<rect x="914" y="707" width="6" height="28" fill="#1414c8" opacity="0.10"/>
<rect x="916" y="707" width="3" height="28" fill="#1414c8" opacity="0.2"/>
<rect x="955" y="707" width="6" height="28" fill="#1414c8" opacity="0.10"/>
<rect x="957" y="707" width="3" height="28" fill="#1414c8" opacity="0.2"/>
<rect x="977" y="707" width="6" height="28" fill="#1414c8" opacity="0.05"/>
<rect x="979" y="707" width="3" height="28" fill="#1414c8" opacity="0.1"/>
</g>
</svg>
</body></html>
